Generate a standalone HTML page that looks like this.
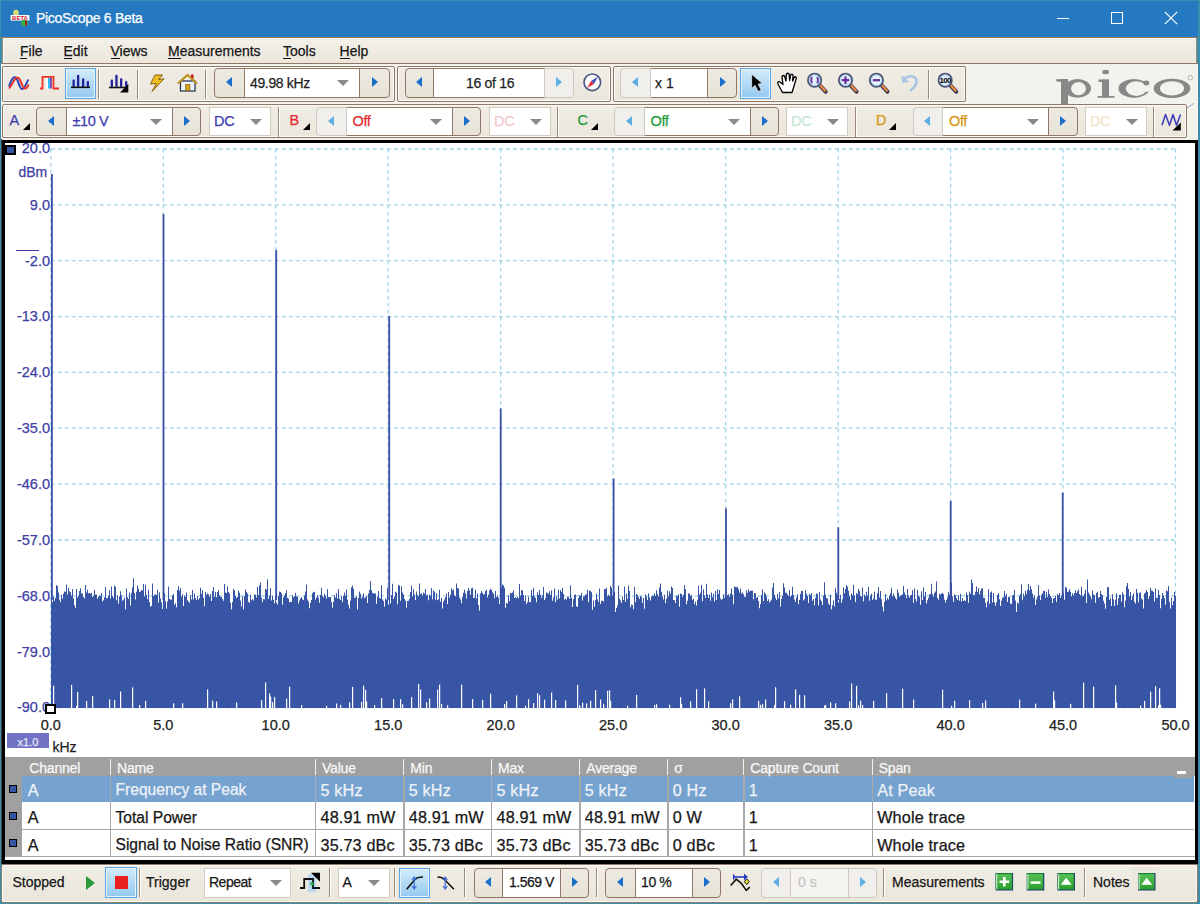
<!DOCTYPE html><html><head><meta charset="utf-8"><style>
*{box-sizing:border-box;}
html,body{margin:0;padding:0;}
body{width:1200px;height:904px;overflow:hidden;position:relative;background:#3b8eac;font-family:"Liberation Sans",sans-serif;}
.a{position:absolute;}
.t{position:absolute;white-space:nowrap;line-height:1;-webkit-text-stroke:0.25px currentColor;}
.strip{position:absolute;border:1.3px solid #8f7868;border-radius:2px;background:linear-gradient(#f0ede6,#ebe6db);box-shadow:inset 0 0 0 1px #fcfbf8;}
.bl{position:absolute;border:1.5px solid #8f7868;border-radius:4px 0 0 4px;background:linear-gradient(#eeeae2,#e8e3d7);}
.br{position:absolute;border:1.5px solid #8f7868;border-radius:0 4px 4px 0;background:linear-gradient(#eeeae2,#e8e3d7);}
.bl.dis,.br.dis{border-color:#cdc8c2;background:#f1efeb;}
.fld{position:absolute;background:#fff;border-top:1.5px solid #8f7868;border-bottom:1.5px solid #8f7868;}
.sep{position:absolute;width:2px;border-left:1.3px solid #9c8878;border-right:1px solid #fff;}
.tri{position:absolute;width:0;height:0;}
.combo{position:absolute;background:#fff;border:1px solid #d4cdc2;}
.dd{position:absolute;width:0;height:0;border-left:6px solid transparent;border-right:6px solid transparent;border-top:6px solid #8a8a8a;}
.sel{position:absolute;border:1.6px solid #58a4e4;background:linear-gradient(#d2ebfa,#94c9f0);box-shadow:inset 0 0 0 1px #e4f3fc;}
</style></head><body><div class="a" style="left:1px;top:1px;width:1197px;height:36px;background:#2479c0"></div>
<svg class="a" style="left:8px;top:8px" width="24" height="22" viewBox="8 8 24 22"><ellipse cx="16" cy="13" rx="2.8" ry="3.2" fill="#d8e070"/><rect x="10.6" y="15" width="18.8" height="5.6" fill="#fff"/><text x="20" y="20" font-family="Liberation Sans" font-weight="bold" font-size="6" text-anchor="middle" fill="#d82030">BETA</text><ellipse cx="24.5" cy="23" rx="3.3" ry="3.2" fill="#38b040"/><rect x="25" y="20.6" width="2" height="5" fill="#a02020"/></svg>
<div class="t" style="left:36px;top:11px;font-size:14px;color:#fff;letter-spacing:-0.3px">PicoScope 6 Beta</div>
<div class="a" style="left:1057px;top:17.5px;width:12px;height:1.2px;background:#fff"></div>
<div class="a" style="left:1110.5px;top:11.7px;width:12.5px;height:12.5px;border:1.2px solid #fff"></div>
<svg class="a" style="left:1164px;top:11px" width="14" height="14"><path d="M0.8 0.8L13.2 13.2M13.2 0.8L0.8 13.2" stroke="#fff" stroke-width="1.2"/></svg>
<div class="a" style="left:1px;top:36.5px;width:1197px;height:1.2px;background:#a07858"></div>
<div class="a" style="left:1.5px;top:37.5px;width:1195px;height:26px;background:linear-gradient(#f4f1eb,#ebe5da);border-left:1.2px solid #9a8a7c;border-right:1.2px solid #9a8a7c;box-shadow:inset 1px 1px 0 #fbfaf7"></div>
<div class="a" style="left:1px;top:62.5px;width:1197px;height:1.3px;background:#8f7868"></div>
<div class="t" style="left:20px;top:44px;font-size:14px;color:#161616">File</div>
<div class="a" style="left:20px;top:57.5px;width:7px;height:1.3px;background:#111"></div>
<div class="t" style="left:63.5px;top:44px;font-size:14px;color:#161616">Edit</div>
<div class="a" style="left:63.5px;top:57.5px;width:8px;height:1.3px;background:#111"></div>
<div class="t" style="left:110.5px;top:44px;font-size:14px;color:#161616">Views</div>
<div class="a" style="left:110.5px;top:57.5px;width:9.5px;height:1.3px;background:#111"></div>
<div class="t" style="left:168px;top:44px;font-size:14px;color:#161616">Measurements</div>
<div class="a" style="left:168px;top:57.5px;width:12.5px;height:1.3px;background:#111"></div>
<div class="t" style="left:283px;top:44px;font-size:14px;color:#161616">Tools</div>
<div class="a" style="left:283px;top:57.5px;width:7.5px;height:1.3px;background:#111"></div>
<div class="t" style="left:339.6px;top:44px;font-size:14px;color:#161616">Help</div>
<div class="a" style="left:339.6px;top:57.5px;width:10.4px;height:1.3px;background:#111"></div>
<div class="a" style="left:1px;top:63.8px;width:1197px;height:76.5px;background:#f4f2ed"></div>
<div class="strip" style="left:1.5px;top:65.6px;width:393px;height:36px"></div>
<div class="strip" style="left:396.7px;top:65.6px;width:214.2px;height:36px"></div>
<div class="strip" style="left:613px;top:65.6px;width:353px;height:36px"></div>
<div class="strip" style="left:1.5px;top:103.5px;width:1185.5px;height:34.6px"></div>
<div class="sel" style="left:65.4px;top:67.6px;width:31px;height:31px"></div>
<div class="sep" style="left:98.4px;top:69.5px;height:29px"></div>
<div class="sep" style="left:137.0px;top:69.5px;height:29px"></div>
<div class="sep" style="left:205.0px;top:69.5px;height:29px"></div>
<div class="fld" style="left:243.0px;top:67.8px;width:117.0px;height:30.6px"></div>
<div class="bl" style="left:214.0px;top:67.8px;width:30.5px;height:30.6px"></div>
<div class="br" style="left:358.5px;top:67.8px;width:31.5px;height:30.6px"></div>
<div class="tri" style="left:225.6px;top:77.3px;border-top:5.8px solid transparent;border-bottom:5.8px solid transparent;border-right:6.8px solid #1a6fc9"></div>
<div class="tri" style="left:371.7px;top:77.3px;border-top:5.8px solid transparent;border-bottom:5.8px solid transparent;border-left:6.8px solid #1a6fc9"></div>
<div class="t" style="left:250px;top:76px;font-size:14px;color:#1e1e1e;letter-spacing:-0.35px">49.98 kHz</div>
<div class="dd" style="left:337px;top:80px"></div>
<div class="fld" style="left:432.8px;top:67.8px;width:112.2px;height:30.6px"></div>
<div class="bl" style="left:404.5px;top:67.8px;width:29.8px;height:30.6px"></div>
<div class="br dis" style="left:543.5px;top:67.8px;width:30.5px;height:30.6px"></div>
<div class="tri" style="left:415.8px;top:77.3px;border-top:5.8px solid transparent;border-bottom:5.8px solid transparent;border-right:6.8px solid #1a6fc9"></div>
<div class="tri" style="left:556.2px;top:77.3px;border-top:5.8px solid transparent;border-bottom:5.8px solid transparent;border-left:6.8px solid #5eaee2"></div>
<div class="t" style="left:466px;top:76px;font-size:14px;color:#1e1e1e;letter-spacing:-0.3px">16 of 16</div>
<div class="fld" style="left:649.8px;top:67.8px;width:58.5px;height:30.6px"></div>
<div class="bl dis" style="left:620.3px;top:67.8px;width:31.0px;height:30.6px"></div>
<div class="br" style="left:706.8px;top:67.8px;width:30.7px;height:30.6px"></div>
<div class="tri" style="left:632.1px;top:77.3px;border-top:5.8px solid transparent;border-bottom:5.8px solid transparent;border-right:6.8px solid #5eaee2"></div>
<div class="tri" style="left:719.6px;top:77.3px;border-top:5.8px solid transparent;border-bottom:5.8px solid transparent;border-left:6.8px solid #1a6fc9"></div>
<div class="t" style="left:655px;top:76px;font-size:14px;color:#1e1e1e">x 1</div>
<div class="sel" style="left:740px;top:67.6px;width:31px;height:31px"></div>
<div class="sep" style="left:928px;top:69.5px;height:29px"></div>
<svg class="a" style="left:1050px;top:64px" width="147" height="39.5" viewBox="1050 64 147 39.5"><path d="M1064.0 88.4 A13.5 9.4 0 1 0 1091.0 88.4 A13.5 9.4 0 1 0 1064.0 88.4 Z M1071.0 88.6 A7.5 6.6 0 1 0 1086.0 88.6 A7.5 6.6 0 1 0 1071.0 88.6 Z " fill="#888888" fill-rule="evenodd"/><rect x="1061" y="79" width="7" height="25" fill="#888888"/><path d="M1055.6 79.3 L1068 79 L1068 81.8 L1057 81.8 Z" fill="#888888"/><rect x="1102" y="79.6" width="7" height="18" fill="#888888"/><path d="M1097.5 96 H1114.5 V97.8 H1097.5 Z M1098.5 79.6 H1109 V82 H1098.5 Z" fill="#888888"/><ellipse cx="1105.6" cy="72" rx="3.4" ry="2.2" fill="#888888"/><path d="M1118.5 88.4 A15.5 9.5 0 1 0 1149.5 88.4 A15.5 9.5 0 1 0 1118.5 88.4 Z M1125.8 88.6 A10.5 7.3 0 1 0 1146.8 88.6 A10.5 7.3 0 1 0 1125.8 88.6 Z " fill="#888888" fill-rule="evenodd"/><rect x="1143.5" y="84.2" width="8" height="7.5" fill="#f4f2ed"/><ellipse cx="1146.3" cy="83" rx="3" ry="2.4" fill="#888888"/><path d="M1153.7 88.4 A18.3 9.6 0 1 0 1190.3 88.4 A18.3 9.6 0 1 0 1153.7 88.4 Z M1160.0 88.4 A12.0 7.2 0 1 0 1184.0 88.4 A12.0 7.2 0 1 0 1160.0 88.4 Z " fill="#888888" fill-rule="evenodd"/><circle cx="1190.3" cy="77.7" r="2.3" fill="none" stroke="#a8a8a8" stroke-width="0.8"/></svg>
<div class="t" style="left:9.5px;top:113px;font-size:14.5px;color:#3c3cb0">A</div>
<div class="tri" style="left:22.5px;top:122.5px;border-left:7.5px solid transparent;border-bottom:7.5px solid #000"></div>
<div class="fld" style="left:65.0px;top:106.5px;width:108.0px;height:29.5px"></div>
<div class="bl" style="left:36.0px;top:106.5px;width:30.5px;height:29.5px"></div>
<div class="br" style="left:171.5px;top:106.5px;width:29.5px;height:29.5px"></div>
<div class="tri" style="left:47.6px;top:115.5px;border-top:5.8px solid transparent;border-bottom:5.8px solid transparent;border-right:6.8px solid #1a6fc9"></div>
<div class="tri" style="left:183.7px;top:115.5px;border-top:5.8px solid transparent;border-bottom:5.8px solid transparent;border-left:6.8px solid #1a6fc9"></div>
<div class="t" style="left:72.5px;top:114px;font-size:14.5px;color:#3c3cb0;letter-spacing:-0.4px">±10 V</div>
<div class="dd" style="left:150px;top:118.5px"></div>
<div class="combo" style="left:209px;top:106.5px;width:62px;height:29.5px"></div>
<div class="t" style="left:214px;top:114px;font-size:14.5px;color:#3c3cb0;letter-spacing:-0.3px">DC</div>
<div class="dd" style="left:250px;top:118.5px"></div>
<div class="sep" style="left:278px;top:107px;height:30px"></div>
<div class="t" style="left:289.5px;top:113px;font-size:14.5px;color:#e4282e">B</div>
<div class="tri" style="left:302.5px;top:122.5px;border-left:7.5px solid transparent;border-bottom:7.5px solid #000"></div>
<div class="fld" style="left:345.0px;top:106.5px;width:108.0px;height:29.5px"></div>
<div class="bl dis" style="left:316.0px;top:106.5px;width:30.5px;height:29.5px"></div>
<div class="br" style="left:451.5px;top:106.5px;width:29.5px;height:29.5px"></div>
<div class="tri" style="left:327.6px;top:115.5px;border-top:5.8px solid transparent;border-bottom:5.8px solid transparent;border-right:6.8px solid #5eaee2"></div>
<div class="tri" style="left:463.7px;top:115.5px;border-top:5.8px solid transparent;border-bottom:5.8px solid transparent;border-left:6.8px solid #1a6fc9"></div>
<div class="t" style="left:352.5px;top:114px;font-size:14.5px;color:#e4282e;letter-spacing:-0.4px">Off</div>
<div class="dd" style="left:430px;top:118.5px"></div>
<div class="combo" style="left:489px;top:106.5px;width:62px;height:29.5px"></div>
<div class="t" style="left:494px;top:114px;font-size:14.5px;color:#f4c8cc;letter-spacing:-0.3px">DC</div>
<div class="dd" style="left:530px;top:118.5px"></div>
<div class="sep" style="left:557px;top:107px;height:30px"></div>
<div class="t" style="left:577.5px;top:113px;font-size:14.5px;color:#1e9a3a">C</div>
<div class="tri" style="left:590.5px;top:122.5px;border-left:7.5px solid transparent;border-bottom:7.5px solid #000"></div>
<div class="fld" style="left:643.0px;top:106.5px;width:108.0px;height:29.5px"></div>
<div class="bl dis" style="left:614.0px;top:106.5px;width:30.5px;height:29.5px"></div>
<div class="br" style="left:749.5px;top:106.5px;width:29.5px;height:29.5px"></div>
<div class="tri" style="left:625.6px;top:115.5px;border-top:5.8px solid transparent;border-bottom:5.8px solid transparent;border-right:6.8px solid #5eaee2"></div>
<div class="tri" style="left:761.7px;top:115.5px;border-top:5.8px solid transparent;border-bottom:5.8px solid transparent;border-left:6.8px solid #1a6fc9"></div>
<div class="t" style="left:650.5px;top:114px;font-size:14.5px;color:#1e9a3a;letter-spacing:-0.4px">Off</div>
<div class="dd" style="left:728px;top:118.5px"></div>
<div class="combo" style="left:786px;top:106.5px;width:62px;height:29.5px"></div>
<div class="t" style="left:791px;top:114px;font-size:14.5px;color:#c4e6d2;letter-spacing:-0.3px">DC</div>
<div class="dd" style="left:827px;top:118.5px"></div>
<div class="sep" style="left:854.5px;top:107px;height:30px"></div>
<div class="t" style="left:876px;top:113px;font-size:14.5px;color:#d4960e">D</div>
<div class="tri" style="left:889px;top:122.5px;border-left:7.5px solid transparent;border-bottom:7.5px solid #000"></div>
<div class="fld" style="left:941.5px;top:106.5px;width:108.0px;height:29.5px"></div>
<div class="bl dis" style="left:912.5px;top:106.5px;width:30.5px;height:29.5px"></div>
<div class="br" style="left:1048.0px;top:106.5px;width:29.5px;height:29.5px"></div>
<div class="tri" style="left:924.1px;top:115.5px;border-top:5.8px solid transparent;border-bottom:5.8px solid transparent;border-right:6.8px solid #5eaee2"></div>
<div class="tri" style="left:1060.2px;top:115.5px;border-top:5.8px solid transparent;border-bottom:5.8px solid transparent;border-left:6.8px solid #1a6fc9"></div>
<div class="t" style="left:949.0px;top:114px;font-size:14.5px;color:#d4960e;letter-spacing:-0.4px">Off</div>
<div class="dd" style="left:1026.5px;top:118.5px"></div>
<div class="combo" style="left:1085px;top:106.5px;width:62px;height:29.5px"></div>
<div class="t" style="left:1090px;top:114px;font-size:14.5px;color:#f2e4c8;letter-spacing:-0.3px">DC</div>
<div class="dd" style="left:1126px;top:118.5px"></div>
<div class="sep" style="left:1153px;top:107px;height:30px"></div>
<svg class="a" style="left:1158px;top:110px" width="26" height="24" viewBox="1158 110 26 24"><path d="M1162 125.3 L1165.5 114.5 L1169.5 125.3 L1173 114.5 L1176.5 125.3 L1180.5 114.5" fill="none" stroke="#4444b8" stroke-width="1.6" stroke-linejoin="round"/><path d="M1172.5 130.5 H1180.8 V122.5 Z" fill="#000"/></svg>
<svg class="a" style="left:1186px;top:102px" width="10" height="8"><path d="M1 6 L8 1.3" stroke="#8aa8c8" stroke-width="1"/></svg>
<div class="a" style="left:1.2px;top:139.6px;width:1197px;height:724.4px;background:#000"></div>
<div class="a" style="left:1px;top:139px;width:1.2px;height:725px;background:#4a4040"></div>
<div class="a" style="left:5.2px;top:142.6px;width:1189.8px;height:615.7px;background:#fff"></div>
<svg class="a" style="left:0;top:0" width="1200" height="904"><line x1="50.8" y1="149.0" x2="50.8" y2="707.5" stroke="#a0d4e8" stroke-width="1.3" stroke-dasharray="3.5 3.5"/><line x1="50.8" y1="149.0" x2="1175.5" y2="149.0" stroke="#a0d4e8" stroke-width="1.3" stroke-dasharray="4 3"/><line x1="163.3" y1="149.0" x2="163.3" y2="707.5" stroke="#a0d4e8" stroke-width="1.3" stroke-dasharray="3.5 3.5"/><line x1="50.8" y1="204.8" x2="1175.5" y2="204.8" stroke="#a0d4e8" stroke-width="1.3" stroke-dasharray="4 3"/><line x1="275.7" y1="149.0" x2="275.7" y2="707.5" stroke="#a0d4e8" stroke-width="1.3" stroke-dasharray="3.5 3.5"/><line x1="50.8" y1="260.7" x2="1175.5" y2="260.7" stroke="#a0d4e8" stroke-width="1.3" stroke-dasharray="4 3"/><line x1="388.2" y1="149.0" x2="388.2" y2="707.5" stroke="#a0d4e8" stroke-width="1.3" stroke-dasharray="3.5 3.5"/><line x1="50.8" y1="316.6" x2="1175.5" y2="316.6" stroke="#a0d4e8" stroke-width="1.3" stroke-dasharray="4 3"/><line x1="500.7" y1="149.0" x2="500.7" y2="707.5" stroke="#a0d4e8" stroke-width="1.3" stroke-dasharray="3.5 3.5"/><line x1="50.8" y1="372.4" x2="1175.5" y2="372.4" stroke="#a0d4e8" stroke-width="1.3" stroke-dasharray="4 3"/><line x1="613.1" y1="149.0" x2="613.1" y2="707.5" stroke="#a0d4e8" stroke-width="1.3" stroke-dasharray="3.5 3.5"/><line x1="50.8" y1="428.2" x2="1175.5" y2="428.2" stroke="#a0d4e8" stroke-width="1.3" stroke-dasharray="4 3"/><line x1="725.6" y1="149.0" x2="725.6" y2="707.5" stroke="#a0d4e8" stroke-width="1.3" stroke-dasharray="3.5 3.5"/><line x1="50.8" y1="484.1" x2="1175.5" y2="484.1" stroke="#a0d4e8" stroke-width="1.3" stroke-dasharray="4 3"/><line x1="838.1" y1="149.0" x2="838.1" y2="707.5" stroke="#a0d4e8" stroke-width="1.3" stroke-dasharray="3.5 3.5"/><line x1="50.8" y1="540.0" x2="1175.5" y2="540.0" stroke="#a0d4e8" stroke-width="1.3" stroke-dasharray="4 3"/><line x1="950.6" y1="149.0" x2="950.6" y2="707.5" stroke="#a0d4e8" stroke-width="1.3" stroke-dasharray="3.5 3.5"/><line x1="50.8" y1="595.8" x2="1175.5" y2="595.8" stroke="#a0d4e8" stroke-width="1.3" stroke-dasharray="4 3"/><line x1="1063.0" y1="149.0" x2="1063.0" y2="707.5" stroke="#a0d4e8" stroke-width="1.3" stroke-dasharray="3.5 3.5"/><line x1="50.8" y1="651.7" x2="1175.5" y2="651.7" stroke="#a0d4e8" stroke-width="1.3" stroke-dasharray="4 3"/><line x1="1175.5" y1="149.0" x2="1175.5" y2="707.5" stroke="#a0d4e8" stroke-width="1.3" stroke-dasharray="3.5 3.5"/><line x1="50.8" y1="707.5" x2="1175.5" y2="707.5" stroke="#a0d4e8" stroke-width="1.3" stroke-dasharray="4 3"/><path d="M51 708.0 L51 595.8 L52 595.8 L52 602.1 L53 602.1 L53 596.5 L54 596.5 L54 600.8 L55 600.8 L55 597.8 L56 597.8 L56 585.2 L57 585.2 L57 586.1 L58 586.1 L58 592.6 L59 592.6 L59 599.5 L60 599.5 L60 601.9 L61 601.9 L61 594.8 L62 594.8 L62 598.5 L63 598.5 L63 593.7 L64 593.7 L64 591.5 L65 591.5 L65 591.7 L66 591.7 L66 584.5 L67 584.5 L67 594.4 L68 594.4 L68 588.1 L69 588.1 L69 591.3 L70 591.3 L70 592.3 L71 592.3 L71 595.5 L72 595.5 L72 589.1 L73 589.1 L73 598.4 L74 598.4 L74 605.3 L75 605.3 L75 607.7 L76 607.7 L76 589.0 L77 589.0 L77 597.6 L78 597.6 L78 595.5 L79 595.5 L79 591.1 L80 591.1 L80 588.3 L81 588.3 L81 593.5 L82 593.5 L82 593.4 L83 593.4 L83 597.1 L84 597.1 L84 598.4 L85 598.4 L85 584.9 L86 584.9 L86 592.6 L87 592.6 L87 589.8 L88 589.8 L88 593.3 L89 593.3 L89 593.1 L90 593.1 L90 593.8 L91 593.8 L91 593.1 L92 593.1 L92 597.1 L93 597.1 L93 596.1 L94 596.1 L94 589.9 L95 589.9 L95 594.5 L96 594.5 L96 594.6 L97 594.6 L97 598.8 L98 598.8 L98 596.8 L99 596.8 L99 595.5 L100 595.5 L100 596.3 L101 596.3 L101 593.1 L102 593.1 L102 601.3 L103 601.3 L103 600.3 L104 600.3 L104 597.3 L105 597.3 L105 587.1 L106 587.1 L106 598.2 L107 598.2 L107 597.9 L108 597.9 L108 596.0 L109 596.0 L109 589.9 L110 589.9 L110 598.6 L111 598.6 L111 586.5 L112 586.5 L112 596.1 L113 596.1 L113 598.0 L114 598.0 L114 585.8 L115 585.8 L115 586.8 L116 586.8 L116 600.3 L117 600.3 L117 595.4 L118 595.4 L118 603.8 L119 603.8 L119 596.6 L120 596.6 L120 591.2 L121 591.2 L121 595.5 L122 595.5 L122 600.8 L123 600.8 L123 599.7 L124 599.7 L124 597.5 L125 597.5 L125 609.2 L126 609.2 L126 588.5 L127 588.5 L127 597.3 L128 597.3 L128 599.0 L129 599.0 L129 592.4 L130 592.4 L130 605.5 L131 605.5 L131 592.7 L132 592.7 L132 587.2 L133 587.2 L133 578.3 L134 578.3 L134 593.0 L135 593.0 L135 599.5 L136 599.5 L136 591.8 L137 591.8 L137 585.5 L138 585.5 L138 588.8 L139 588.8 L139 592.1 L140 592.1 L140 591.7 L141 591.7 L141 590.1 L142 590.1 L142 590.5 L143 590.5 L143 584.0 L144 584.0 L144 596.5 L145 596.5 L145 584.7 L146 584.7 L146 595.1 L147 595.1 L147 599.3 L148 599.3 L148 589.7 L149 589.7 L149 601.9 L150 601.9 L150 606.7 L151 606.7 L151 605.7 L152 605.7 L152 583.5 L153 583.5 L153 596.0 L154 596.0 L154 594.8 L155 594.8 L155 594.6 L156 594.6 L156 594.9 L157 594.9 L157 589.7 L158 589.7 L158 602.6 L159 602.6 L159 592.2 L160 592.2 L160 598.6 L161 598.6 L161 602.3 L162 602.3 L162 609.0 L163 609.0 L163 597.8 L164 597.8 L164 593.0 L165 593.0 L165 601.0 L166 601.0 L166 608.4 L167 608.4 L167 601.5 L168 601.5 L168 586.5 L169 586.5 L169 599.1 L170 599.1 L170 599.4 L171 599.4 L171 599.8 L172 599.8 L172 595.4 L173 595.4 L173 594.0 L174 594.0 L174 605.0 L175 605.0 L175 603.2 L176 603.2 L176 607.2 L177 607.2 L177 590.0 L178 590.0 L178 586.3 L179 586.3 L179 590.7 L180 590.7 L180 588.3 L181 588.3 L181 596.6 L182 596.6 L182 594.3 L183 594.3 L183 606.0 L184 606.0 L184 595.5 L185 595.5 L185 597.0 L186 597.0 L186 592.5 L187 592.5 L187 600.2 L188 600.2 L188 601.4 L189 601.4 L189 602.8 L190 602.8 L190 595.1 L191 595.1 L191 599.6 L192 599.6 L192 590.0 L193 590.0 L193 599.4 L194 599.4 L194 593.4 L195 593.4 L195 598.2 L196 598.2 L196 599.9 L197 599.9 L197 596.0 L198 596.0 L198 599.7 L199 599.7 L199 597.9 L200 597.9 L200 587.7 L201 587.7 L201 593.8 L202 593.8 L202 590.2 L203 590.2 L203 597.7 L204 597.7 L204 606.2 L205 606.2 L205 592.0 L206 592.0 L206 594.9 L207 594.9 L207 593.2 L208 593.2 L208 594.2 L209 594.2 L209 596.4 L210 596.4 L210 594.1 L211 594.1 L211 601.1 L212 601.1 L212 591.0 L213 591.0 L213 587.0 L214 587.0 L214 597.0 L215 597.0 L215 591.8 L216 591.8 L216 597.3 L217 597.3 L217 592.1 L218 592.1 L218 590.3 L219 590.3 L219 595.6 L220 595.6 L220 596.8 L221 596.8 L221 597.0 L222 597.0 L222 599.0 L223 599.0 L223 600.7 L224 600.7 L224 584.1 L225 584.1 L225 592.4 L226 592.4 L226 593.1 L227 593.1 L227 586.5 L228 586.5 L228 592.0 L229 592.0 L229 593.5 L230 593.5 L230 602.8 L231 602.8 L231 609.6 L232 609.6 L232 602.0 L233 602.0 L233 589.0 L234 589.0 L234 590.3 L235 590.3 L235 595.9 L236 595.9 L236 597.9 L237 597.9 L237 596.9 L238 596.9 L238 590.5 L239 590.5 L239 592.8 L240 592.8 L240 600.6 L241 600.6 L241 606.5 L242 606.5 L242 596.6 L243 596.6 L243 609.2 L244 609.2 L244 596.1 L245 596.1 L245 589.5 L246 589.5 L246 591.9 L247 591.9 L247 593.5 L248 593.5 L248 601.8 L249 601.8 L249 602.8 L250 602.8 L250 594.7 L251 594.7 L251 600.2 L252 600.2 L252 598.9 L253 598.9 L253 600.5 L254 600.5 L254 594.5 L255 594.5 L255 594.7 L256 594.7 L256 597.6 L257 597.6 L257 587.1 L258 587.1 L258 594.9 L259 594.9 L259 585.3 L260 585.3 L260 582.4 L261 582.4 L261 597.7 L262 597.7 L262 602.0 L263 602.0 L263 599.0 L264 599.0 L264 599.2 L265 599.2 L265 589.1 L266 589.1 L266 589.6 L267 589.6 L267 579.2 L268 579.2 L268 599.1 L269 599.1 L269 595.7 L270 595.7 L270 588.3 L271 588.3 L271 600.5 L272 600.5 L272 595.5 L273 595.5 L273 599.7 L274 599.7 L274 603.3 L275 603.3 L275 595.5 L276 595.5 L276 602.4 L277 602.4 L277 604.5 L278 604.5 L278 596.3 L279 596.3 L279 591.6 L280 591.6 L280 592.0 L281 592.0 L281 593.3 L282 593.3 L282 604.8 L283 604.8 L283 597.5 L284 597.5 L284 595.6 L285 595.6 L285 593.3 L286 593.3 L286 590.3 L287 590.3 L287 598.0 L288 598.0 L288 598.6 L289 598.6 L289 602.3 L290 602.3 L290 601.7 L291 601.7 L291 602.0 L292 602.0 L292 595.2 L293 595.2 L293 597.3 L294 597.3 L294 596.3 L295 596.3 L295 592.8 L296 592.8 L296 596.4 L297 596.4 L297 596.8 L298 596.8 L298 603.4 L299 603.4 L299 600.5 L300 600.5 L300 598.5 L301 598.5 L301 597.0 L302 597.0 L302 599.3 L303 599.3 L303 600.1 L304 600.1 L304 595.5 L305 595.5 L305 591.5 L306 591.5 L306 584.6 L307 584.6 L307 599.6 L308 599.6 L308 601.5 L309 601.5 L309 608.2 L310 608.2 L310 602.8 L311 602.8 L311 599.9 L312 599.9 L312 593.2 L313 593.2 L313 591.8 L314 591.8 L314 592.1 L315 592.1 L315 599.5 L316 599.5 L316 597.5 L317 597.5 L317 595.2 L318 595.2 L318 597.7 L319 597.7 L319 602.7 L320 602.7 L320 595.0 L321 595.0 L321 588.1 L322 588.1 L322 595.7 L323 595.7 L323 597.5 L324 597.5 L324 593.8 L325 593.8 L325 596.0 L326 596.0 L326 598.5 L327 598.5 L327 589.2 L328 589.2 L328 596.9 L329 596.9 L329 597.3 L330 597.3 L330 596.9 L331 596.9 L331 601.9 L332 601.9 L332 607.8 L333 607.8 L333 601.8 L334 601.8 L334 595.2 L335 595.2 L335 597.4 L336 597.4 L336 593.2 L337 593.2 L337 598.5 L338 598.5 L338 589.1 L339 589.1 L339 598.6 L340 598.6 L340 600.1 L341 600.1 L341 596.2 L342 596.2 L342 602.0 L343 602.0 L343 595.7 L344 595.7 L344 592.5 L345 592.5 L345 595.8 L346 595.8 L346 589.4 L347 589.4 L347 599.7 L348 599.7 L348 604.7 L349 604.7 L349 608.6 L350 608.6 L350 600.6 L351 600.6 L351 587.3 L352 587.3 L352 585.6 L353 585.6 L353 588.8 L354 588.8 L354 597.7 L355 597.7 L355 597.8 L356 597.8 L356 596.2 L357 596.2 L357 609.4 L358 609.4 L358 597.9 L359 597.9 L359 591.4 L360 591.4 L360 593.7 L361 593.7 L361 598.4 L362 598.4 L362 596.5 L363 596.5 L363 593.2 L364 593.2 L364 598.2 L365 598.2 L365 597.2 L366 597.2 L366 596.0 L367 596.0 L367 602.9 L368 602.9 L368 593.6 L369 593.6 L369 590.1 L370 590.1 L370 581.1 L371 581.1 L371 590.2 L372 590.2 L372 592.8 L373 592.8 L373 593.5 L374 593.5 L374 593.5 L375 593.5 L375 593.6 L376 593.6 L376 603.7 L377 603.7 L377 596.4 L378 596.4 L378 591.0 L379 591.0 L379 598.0 L380 598.0 L380 598.6 L381 598.6 L381 585.4 L382 585.4 L382 599.6 L383 599.6 L383 601.1 L384 601.1 L384 606.7 L385 606.7 L385 598.6 L386 598.6 L386 599.5 L387 599.5 L387 587.7 L388 587.7 L388 605.1 L389 605.1 L389 599.4 L390 599.4 L390 603.6 L391 603.6 L391 594.9 L392 594.9 L392 583.7 L393 583.7 L393 599.1 L394 599.1 L394 596.8 L395 596.8 L395 591.8 L396 591.8 L396 592.5 L397 592.5 L397 604.3 L398 604.3 L398 585.1 L399 585.1 L399 585.8 L400 585.8 L400 600.7 L401 600.7 L401 586.2 L402 586.2 L402 592.6 L403 592.6 L403 594.5 L404 594.5 L404 598.9 L405 598.9 L405 600.7 L406 600.7 L406 607.8 L407 607.8 L407 600.9 L408 600.9 L408 600.8 L409 600.8 L409 598.8 L410 598.8 L410 592.0 L411 592.0 L411 585.7 L412 585.7 L412 596.3 L413 596.3 L413 589.3 L414 589.3 L414 594.5 L415 594.5 L415 600.1 L416 600.1 L416 591.6 L417 591.6 L417 595.0 L418 595.0 L418 596.2 L419 596.2 L419 583.6 L420 583.6 L420 594.1 L421 594.1 L421 593.2 L422 593.2 L422 595.6 L423 595.6 L423 592.6 L424 592.6 L424 593.4 L425 593.4 L425 589.1 L426 589.1 L426 595.3 L427 595.3 L427 594.8 L428 594.8 L428 600.3 L429 600.3 L429 594.5 L430 594.5 L430 595.7 L431 595.7 L431 588.1 L432 588.1 L432 599.2 L433 599.2 L433 590.4 L434 590.4 L434 591.8 L435 591.8 L435 599.7 L436 599.7 L436 593.2 L437 593.2 L437 600.2 L438 600.2 L438 599.2 L439 599.2 L439 589.8 L440 589.8 L440 601.7 L441 601.7 L441 598.0 L442 598.0 L442 608.5 L443 608.5 L443 601.6 L444 601.6 L444 599.4 L445 599.4 L445 597.1 L446 597.1 L446 593.4 L447 593.4 L447 604.1 L448 604.1 L448 591.9 L449 591.9 L449 597.5 L450 597.5 L450 594.7 L451 594.7 L451 588.4 L452 588.4 L452 590.3 L453 590.3 L453 589.4 L454 589.4 L454 595.3 L455 595.3 L455 596.2 L456 596.2 L456 583.6 L457 583.6 L457 587.9 L458 587.9 L458 588.7 L459 588.7 L459 597.4 L460 597.4 L460 599.5 L461 599.5 L461 603.3 L462 603.3 L462 596.7 L463 596.7 L463 592.8 L464 592.8 L464 589.8 L465 589.8 L465 593.5 L466 593.5 L466 598.6 L467 598.6 L467 590.9 L468 590.9 L468 588.0 L469 588.0 L469 590.2 L470 590.2 L470 594.7 L471 594.7 L471 588.2 L472 588.2 L472 587.7 L473 587.7 L473 598.1 L474 598.1 L474 597.7 L475 597.7 L475 589.7 L476 589.7 L476 598.4 L477 598.4 L477 593.4 L478 593.4 L478 605.1 L479 605.1 L479 610.5 L480 610.5 L480 593.4 L481 593.4 L481 591.1 L482 591.1 L482 592.8 L483 592.8 L483 594.5 L484 594.5 L484 594.3 L485 594.3 L485 591.1 L486 591.1 L486 589.7 L487 589.7 L487 597.4 L488 597.4 L488 594.8 L489 594.8 L489 590.5 L490 590.5 L490 588.8 L491 588.8 L491 589.7 L492 589.7 L492 592.2 L493 592.2 L493 593.4 L494 593.4 L494 598.3 L495 598.3 L495 591.0 L496 591.0 L496 597.0 L497 597.0 L497 595.4 L498 595.4 L498 597.7 L499 597.7 L499 604.1 L500 604.1 L500 595.5 L501 595.5 L501 587.5 L502 587.5 L502 584.6 L503 584.6 L503 585.6 L504 585.6 L504 587.7 L505 587.7 L505 607.8 L506 607.8 L506 603.0 L507 603.0 L507 603.5 L508 603.5 L508 595.3 L509 595.3 L509 600.9 L510 600.9 L510 593.0 L511 593.0 L511 593.3 L512 593.3 L512 592.6 L513 592.6 L513 590.4 L514 590.4 L514 597.9 L515 597.9 L515 597.2 L516 597.2 L516 598.3 L517 598.3 L517 596.6 L518 596.6 L518 598.2 L519 598.2 L519 584.1 L520 584.1 L520 595.8 L521 595.8 L521 590.6 L522 590.6 L522 589.9 L523 589.9 L523 594.9 L524 594.9 L524 600.9 L525 600.9 L525 595.2 L526 595.2 L526 604.0 L527 604.0 L527 601.9 L528 601.9 L528 596.8 L529 596.8 L529 602.0 L530 602.0 L530 602.2 L531 602.2 L531 590.0 L532 590.0 L532 595.8 L533 595.8 L533 587.8 L534 587.8 L534 596.2 L535 596.2 L535 598.0 L536 598.0 L536 602.2 L537 602.2 L537 592.3 L538 592.3 L538 594.9 L539 594.9 L539 590.0 L540 590.0 L540 594.6 L541 594.6 L541 597.8 L542 597.8 L542 595.6 L543 595.6 L543 587.1 L544 587.1 L544 599.9 L545 599.9 L545 598.2 L546 598.2 L546 592.5 L547 592.5 L547 593.2 L548 593.2 L548 593.5 L549 593.5 L549 591.3 L550 591.3 L550 595.1 L551 595.1 L551 590.5 L552 590.5 L552 600.7 L553 600.7 L553 597.2 L554 597.2 L554 588.5 L555 588.5 L555 602.3 L556 602.3 L556 596.2 L557 596.2 L557 599.4 L558 599.4 L558 589.8 L559 589.8 L559 598.6 L560 598.6 L560 590.0 L561 590.0 L561 592.0 L562 592.0 L562 587.9 L563 587.9 L563 593.9 L564 593.9 L564 599.7 L565 599.7 L565 598.4 L566 598.4 L566 599.4 L567 599.4 L567 596.4 L568 596.4 L568 596.7 L569 596.7 L569 599.0 L570 599.0 L570 585.2 L571 585.2 L571 597.9 L572 597.9 L572 607.1 L573 607.1 L573 599.2 L574 599.2 L574 594.7 L575 594.7 L575 594.6 L576 594.6 L576 606.3 L577 606.3 L577 607.0 L578 607.0 L578 598.1 L579 598.1 L579 595.2 L580 595.2 L580 595.7 L581 595.7 L581 592.7 L582 592.7 L582 600.4 L583 600.4 L583 596.6 L584 596.6 L584 596.3 L585 596.3 L585 594.8 L586 594.8 L586 594.3 L587 594.3 L587 589.8 L588 589.8 L588 602.3 L589 602.3 L589 590.8 L590 590.8 L590 590.8 L591 590.8 L591 592.2 L592 592.2 L592 609.8 L593 609.8 L593 600.6 L594 600.6 L594 606.7 L595 606.7 L595 600.1 L596 600.1 L596 593.6 L597 593.6 L597 599.2 L598 599.2 L598 601.7 L599 601.7 L599 588.4 L600 588.4 L600 603.9 L601 603.9 L601 600.8 L602 600.8 L602 600.7 L603 600.7 L603 601.6 L604 601.6 L604 588.9 L605 588.9 L605 589.3 L606 589.3 L606 587.7 L607 587.7 L607 596.2 L608 596.2 L608 594.8 L609 594.8 L609 596.0 L610 596.0 L610 586.0 L611 586.0 L611 587.4 L612 587.4 L612 595.5 L613 595.5 L613 592.2 L614 592.2 L614 591.9 L615 591.9 L615 612.0 L616 612.0 L616 608.1 L617 608.1 L617 605.5 L618 605.5 L618 585.6 L619 585.6 L619 598.6 L620 598.6 L620 600.4 L621 600.4 L621 603.0 L622 603.0 L622 596.5 L623 596.5 L623 599.9 L624 599.9 L624 586.4 L625 586.4 L625 601.8 L626 601.8 L626 593.4 L627 593.4 L627 598.7 L628 598.7 L628 585.5 L629 585.5 L629 590.9 L630 590.9 L630 607.2 L631 607.2 L631 604.4 L632 604.4 L632 605.0 L633 605.0 L633 609.2 L634 609.2 L634 587.1 L635 587.1 L635 602.2 L636 602.2 L636 593.9 L637 593.9 L637 595.0 L638 595.0 L638 596.9 L639 596.9 L639 599.0 L640 599.0 L640 596.0 L641 596.0 L641 597.0 L642 597.0 L642 602.9 L643 602.9 L643 598.1 L644 598.1 L644 608.8 L645 608.8 L645 594.3 L646 594.3 L646 596.4 L647 596.4 L647 600.1 L648 600.1 L648 593.2 L649 593.2 L649 597.4 L650 597.4 L650 600.4 L651 600.4 L651 596.6 L652 596.6 L652 595.4 L653 595.4 L653 596.0 L654 596.0 L654 593.2 L655 593.2 L655 596.1 L656 596.1 L656 590.3 L657 590.3 L657 593.9 L658 593.9 L658 596.3 L659 596.3 L659 587.5 L660 587.5 L660 583.6 L661 583.6 L661 591.8 L662 591.8 L662 596.8 L663 596.8 L663 599.5 L664 599.5 L664 594.8 L665 594.8 L665 603.2 L666 603.2 L666 598.9 L667 598.9 L667 590.7 L668 590.7 L668 596.6 L669 596.6 L669 591.2 L670 591.2 L670 593.7 L671 593.7 L671 586.5 L672 586.5 L672 588.0 L673 588.0 L673 600.1 L674 600.1 L674 600.3 L675 600.3 L675 602.9 L676 602.9 L676 595.8 L677 595.8 L677 596.3 L678 596.3 L678 594.3 L679 594.3 L679 606.8 L680 606.8 L680 593.5 L681 593.5 L681 594.0 L682 594.0 L682 597.1 L683 597.1 L683 594.8 L684 594.8 L684 584.9 L685 584.9 L685 589.3 L686 589.3 L686 604.3 L687 604.3 L687 600.7 L688 600.7 L688 593.6 L689 593.6 L689 593.6 L690 593.6 L690 595.8 L691 595.8 L691 595.0 L692 595.0 L692 599.8 L693 599.8 L693 598.7 L694 598.7 L694 604.3 L695 604.3 L695 601.4 L696 601.4 L696 605.6 L697 605.6 L697 599.7 L698 599.7 L698 585.8 L699 585.8 L699 594.7 L700 594.7 L700 592.7 L701 592.7 L701 584.8 L702 584.8 L702 601.2 L703 601.2 L703 589.4 L704 589.4 L704 595.2 L705 595.2 L705 598.1 L706 598.1 L706 583.8 L707 583.8 L707 594.6 L708 594.6 L708 598.0 L709 598.0 L709 594.6 L710 594.6 L710 600.8 L711 600.8 L711 592.5 L712 592.5 L712 597.2 L713 597.2 L713 593.7 L714 593.7 L714 601.4 L715 601.4 L715 590.9 L716 590.9 L716 600.1 L717 600.1 L717 589.2 L718 589.2 L718 593.9 L719 593.9 L719 589.9 L720 589.9 L720 598.6 L721 598.6 L721 599.8 L722 599.8 L722 599.1 L723 599.1 L723 594.3 L724 594.3 L724 597.9 L725 597.9 L725 594.6 L726 594.6 L726 598.6 L727 598.6 L727 595.2 L728 595.2 L728 594.2 L729 594.2 L729 596.8 L730 596.8 L730 593.5 L731 593.5 L731 588.4 L732 588.4 L732 594.8 L733 594.8 L733 604.2 L734 604.2 L734 586.4 L735 586.4 L735 586.9 L736 586.9 L736 587.3 L737 587.3 L737 586.7 L738 586.7 L738 589.3 L739 589.3 L739 592.5 L740 592.5 L740 588.4 L741 588.4 L741 593.5 L742 593.5 L742 592.5 L743 592.5 L743 594.2 L744 594.2 L744 597.0 L745 597.0 L745 596.9 L746 596.9 L746 590.2 L747 590.2 L747 592.7 L748 592.7 L748 589.6 L749 589.6 L749 591.5 L750 591.5 L750 590.9 L751 590.9 L751 590.5 L752 590.5 L752 590.5 L753 590.5 L753 599.2 L754 599.2 L754 593.0 L755 593.0 L755 593.3 L756 593.3 L756 597.9 L757 597.9 L757 596.7 L758 596.7 L758 601.0 L759 601.0 L759 608.3 L760 608.3 L760 604.0 L761 604.0 L761 595.1 L762 595.1 L762 589.2 L763 589.2 L763 601.1 L764 601.1 L764 592.4 L765 592.4 L765 593.8 L766 593.8 L766 596.6 L767 596.6 L767 601.1 L768 601.1 L768 599.2 L769 599.2 L769 602.4 L770 602.4 L770 601.1 L771 601.1 L771 599.8 L772 599.8 L772 587.6 L773 587.6 L773 583.0 L774 583.0 L774 594.7 L775 594.7 L775 597.8 L776 597.8 L776 599.9 L777 599.9 L777 593.9 L778 593.9 L778 598.4 L779 598.4 L779 592.1 L780 592.1 L780 606.4 L781 606.4 L781 599.0 L782 599.0 L782 596.0 L783 596.0 L783 583.3 L784 583.3 L784 587.6 L785 587.6 L785 592.5 L786 592.5 L786 593.0 L787 593.0 L787 594.5 L788 594.5 L788 596.0 L789 596.0 L789 590.0 L790 590.0 L790 596.8 L791 596.8 L791 595.2 L792 595.2 L792 586.7 L793 586.7 L793 594.9 L794 594.9 L794 599.4 L795 599.4 L795 602.1 L796 602.1 L796 597.5 L797 597.5 L797 594.2 L798 594.2 L798 603.9 L799 603.9 L799 600.0 L800 600.0 L800 594.1 L801 594.1 L801 590.9 L802 590.9 L802 591.1 L803 591.1 L803 600.4 L804 600.4 L804 599.3 L805 599.3 L805 590.3 L806 590.3 L806 593.7 L807 593.7 L807 596.1 L808 596.1 L808 603.0 L809 603.0 L809 593.8 L810 593.8 L810 595.2 L811 595.2 L811 592.9 L812 592.9 L812 600.7 L813 600.7 L813 599.1 L814 599.1 L814 605.2 L815 605.2 L815 597.7 L816 597.7 L816 593.4 L817 593.4 L817 593.7 L818 593.7 L818 605.4 L819 605.4 L819 592.1 L820 592.1 L820 599.6 L821 599.6 L821 601.2 L822 601.2 L822 605.1 L823 605.1 L823 595.7 L824 595.7 L824 582.2 L825 582.2 L825 594.6 L826 594.6 L826 597.9 L827 597.9 L827 598.5 L828 598.5 L828 603.5 L829 603.5 L829 605.1 L830 605.1 L830 594.7 L831 594.7 L831 609.4 L832 609.4 L832 605.3 L833 605.3 L833 600.5 L834 600.5 L834 606.6 L835 606.6 L835 587.8 L836 587.8 L836 592.8 L837 592.8 L837 594.9 L838 594.9 L838 602.4 L839 602.4 L839 599.1 L840 599.1 L840 594.8 L841 594.8 L841 602.7 L842 602.7 L842 599.3 L843 599.3 L843 587.5 L844 587.5 L844 593.3 L845 593.3 L845 588.9 L846 588.9 L846 584.9 L847 584.9 L847 586.8 L848 586.8 L848 590.8 L849 590.8 L849 596.2 L850 596.2 L850 599.7 L851 599.7 L851 593.4 L852 593.4 L852 595.4 L853 595.4 L853 584.7 L854 584.7 L854 595.2 L855 595.2 L855 601.9 L856 601.9 L856 593.1 L857 593.1 L857 594.3 L858 594.3 L858 589.0 L859 589.0 L859 590.9 L860 590.9 L860 595.8 L861 595.8 L861 596.6 L862 596.6 L862 587.6 L863 587.6 L863 601.4 L864 601.4 L864 594.8 L865 594.8 L865 596.6 L866 596.6 L866 591.7 L867 591.7 L867 595.4 L868 595.4 L868 586.7 L869 586.7 L869 600.7 L870 600.7 L870 595.7 L871 595.7 L871 593.8 L872 593.8 L872 599.9 L873 599.9 L873 598.2 L874 598.2 L874 591.8 L875 591.8 L875 599.7 L876 599.7 L876 599.7 L877 599.7 L877 593.2 L878 593.2 L878 586.9 L879 586.9 L879 597.5 L880 597.5 L880 591.1 L881 591.1 L881 599.2 L882 599.2 L882 606.5 L883 606.5 L883 611.4 L884 611.4 L884 601.7 L885 601.7 L885 594.0 L886 594.0 L886 600.3 L887 600.3 L887 598.1 L888 598.1 L888 599.5 L889 599.5 L889 595.5 L890 595.5 L890 593.2 L891 593.2 L891 587.7 L892 587.7 L892 596.4 L893 596.4 L893 593.3 L894 593.3 L894 596.0 L895 596.0 L895 598.0 L896 598.0 L896 599.4 L897 599.4 L897 589.6 L898 589.6 L898 592.7 L899 592.7 L899 596.8 L900 596.8 L900 596.1 L901 596.1 L901 595.1 L902 595.1 L902 594.4 L903 594.4 L903 586.1 L904 586.1 L904 592.6 L905 592.6 L905 594.7 L906 594.7 L906 598.0 L907 598.0 L907 588.9 L908 588.9 L908 595.4 L909 595.4 L909 597.6 L910 597.6 L910 595.2 L911 595.2 L911 595.0 L912 595.0 L912 590.2 L913 590.2 L913 602.8 L914 602.8 L914 588.6 L915 588.6 L915 599.0 L916 599.0 L916 601.4 L917 601.4 L917 589.7 L918 589.7 L918 595.4 L919 595.4 L919 597.3 L920 597.3 L920 604.8 L921 604.8 L921 591.3 L922 591.3 L922 600.1 L923 600.1 L923 587.4 L924 587.4 L924 596.3 L925 596.3 L925 592.1 L926 592.1 L926 603.6 L927 603.6 L927 600.3 L928 600.3 L928 597.8 L929 597.8 L929 594.6 L930 594.6 L930 593.8 L931 593.8 L931 583.7 L932 583.7 L932 594.2 L933 594.2 L933 596.7 L934 596.7 L934 593.0 L935 593.0 L935 591.6 L936 591.6 L936 581.6 L937 581.6 L937 597.9 L938 597.9 L938 599.8 L939 599.8 L939 593.7 L940 593.7 L940 594.6 L941 594.6 L941 593.6 L942 593.6 L942 592.9 L943 592.9 L943 594.2 L944 594.2 L944 599.4 L945 599.4 L945 602.4 L946 602.4 L946 599.9 L947 599.9 L947 597.4 L948 597.4 L948 592.0 L949 592.0 L949 594.6 L950 594.6 L950 595.4 L951 595.4 L951 582.8 L952 582.8 L952 596.3 L953 596.3 L953 601.7 L954 601.7 L954 594.6 L955 594.6 L955 595.3 L956 595.3 L956 598.1 L957 598.1 L957 600.1 L958 600.1 L958 595.1 L959 595.1 L959 600.8 L960 600.8 L960 593.8 L961 593.8 L961 601.4 L962 601.4 L962 597.9 L963 597.9 L963 601.0 L964 601.0 L964 600.3 L965 600.3 L965 601.0 L966 601.0 L966 592.5 L967 592.5 L967 595.1 L968 595.1 L968 602.8 L969 602.8 L969 591.6 L970 591.6 L970 593.7 L971 593.7 L971 579.6 L972 579.6 L972 583.1 L973 583.1 L973 595.2 L974 595.2 L974 594.9 L975 594.9 L975 591.7 L976 591.7 L976 586.4 L977 586.4 L977 592.0 L978 592.0 L978 588.3 L979 588.3 L979 594.6 L980 594.6 L980 591.1 L981 591.1 L981 588.3 L982 588.3 L982 588.6 L983 588.6 L983 597.8 L984 597.8 L984 597.9 L985 597.9 L985 602.8 L986 602.8 L986 607.2 L987 607.2 L987 601.2 L988 601.2 L988 589.2 L989 589.2 L989 603.7 L990 603.7 L990 592.4 L991 592.4 L991 591.5 L992 591.5 L992 602.5 L993 602.5 L993 592.9 L994 592.9 L994 602.3 L995 602.3 L995 605.8 L996 605.8 L996 602.3 L997 602.3 L997 595.0 L998 595.0 L998 593.0 L999 593.0 L999 599.3 L1000 599.3 L1000 605.9 L1001 605.9 L1001 600.7 L1002 600.7 L1002 597.4 L1003 597.4 L1003 597.4 L1004 597.4 L1004 591.1 L1005 591.1 L1005 596.3 L1006 596.3 L1006 593.7 L1007 593.7 L1007 601.9 L1008 601.9 L1008 596.9 L1009 596.9 L1009 596.8 L1010 596.8 L1010 603.6 L1011 603.6 L1011 604.0 L1012 604.0 L1012 595.8 L1013 595.8 L1013 595.0 L1014 595.0 L1014 590.0 L1015 590.0 L1015 600.4 L1016 600.4 L1016 612.0 L1017 612.0 L1017 602.6 L1018 602.6 L1018 603.5 L1019 603.5 L1019 595.9 L1020 595.9 L1020 594.0 L1021 594.0 L1021 584.5 L1022 584.5 L1022 599.8 L1023 599.8 L1023 593.5 L1024 593.5 L1024 596.3 L1025 596.3 L1025 590.7 L1026 590.7 L1026 594.0 L1027 594.0 L1027 589.7 L1028 589.7 L1028 584.1 L1029 584.1 L1029 590.7 L1030 590.7 L1030 586.0 L1031 586.0 L1031 589.2 L1032 589.2 L1032 593.6 L1033 593.6 L1033 597.8 L1034 597.8 L1034 595.3 L1035 595.3 L1035 605.0 L1036 605.0 L1036 599.2 L1037 599.2 L1037 596.6 L1038 596.6 L1038 585.0 L1039 585.0 L1039 595.6 L1040 595.6 L1040 600.0 L1041 600.0 L1041 595.3 L1042 595.3 L1042 593.3 L1043 593.3 L1043 591.0 L1044 591.0 L1044 591.1 L1045 591.1 L1045 597.8 L1046 597.8 L1046 591.7 L1047 591.7 L1047 596.9 L1048 596.9 L1048 589.6 L1049 589.6 L1049 594.0 L1050 594.0 L1050 596.1 L1051 596.1 L1051 597.8 L1052 597.8 L1052 603.1 L1053 603.1 L1053 598.4 L1054 598.4 L1054 598.1 L1055 598.1 L1055 596.0 L1056 596.0 L1056 602.0 L1057 602.0 L1057 593.9 L1058 593.9 L1058 595.2 L1059 595.2 L1059 593.1 L1060 593.1 L1060 597.9 L1061 597.9 L1061 595.6 L1062 595.6 L1062 593.9 L1063 593.9 L1063 593.0 L1064 593.0 L1064 599.8 L1065 599.8 L1065 586.7 L1066 586.7 L1066 587.8 L1067 587.8 L1067 592.0 L1068 592.0 L1068 591.6 L1069 591.6 L1069 589.3 L1070 589.3 L1070 591.8 L1071 591.8 L1071 596.2 L1072 596.2 L1072 593.3 L1073 593.3 L1073 595.5 L1074 595.5 L1074 592.9 L1075 592.9 L1075 590.3 L1076 590.3 L1076 593.0 L1077 593.0 L1077 591.2 L1078 591.2 L1078 589.5 L1079 589.5 L1079 594.0 L1080 594.0 L1080 595.4 L1081 595.4 L1081 586.7 L1082 586.7 L1082 596.6 L1083 596.6 L1083 596.0 L1084 596.0 L1084 593.8 L1085 593.8 L1085 590.1 L1086 590.1 L1086 603.0 L1087 603.0 L1087 579.6 L1088 579.6 L1088 592.6 L1089 592.6 L1089 594.5 L1090 594.5 L1090 596.5 L1091 596.5 L1091 599.3 L1092 599.3 L1092 590.5 L1093 590.5 L1093 594.6 L1094 594.6 L1094 595.3 L1095 595.3 L1095 602.7 L1096 602.7 L1096 593.1 L1097 593.1 L1097 591.7 L1098 591.7 L1098 597.7 L1099 597.7 L1099 596.9 L1100 596.9 L1100 590.9 L1101 590.9 L1101 594.0 L1102 594.0 L1102 595.4 L1103 595.4 L1103 600.7 L1104 600.7 L1104 603.6 L1105 603.6 L1105 608.8 L1106 608.8 L1106 596.8 L1107 596.8 L1107 587.1 L1108 587.1 L1108 587.3 L1109 587.3 L1109 599.9 L1110 599.9 L1110 598.3 L1111 598.3 L1111 606.1 L1112 606.1 L1112 594.2 L1113 594.2 L1113 599.3 L1114 599.3 L1114 605.9 L1115 605.9 L1115 599.7 L1116 599.7 L1116 593.2 L1117 593.2 L1117 605.1 L1118 605.1 L1118 598.5 L1119 598.5 L1119 594.7 L1120 594.7 L1120 594.8 L1121 594.8 L1121 601.7 L1122 601.7 L1122 592.2 L1123 592.2 L1123 594.5 L1124 594.5 L1124 607.2 L1125 607.2 L1125 600.6 L1126 600.6 L1126 585.9 L1127 585.9 L1127 583.1 L1128 583.1 L1128 589.1 L1129 589.1 L1129 596.5 L1130 596.5 L1130 592.0 L1131 592.0 L1131 600.1 L1132 600.1 L1132 596.2 L1133 596.2 L1133 593.2 L1134 593.2 L1134 601.7 L1135 601.7 L1135 603.6 L1136 603.6 L1136 589.0 L1137 589.0 L1137 592.8 L1138 592.8 L1138 602.3 L1139 602.3 L1139 592.7 L1140 592.7 L1140 592.6 L1141 592.6 L1141 598.6 L1142 598.6 L1142 599.4 L1143 599.4 L1143 608.4 L1144 608.4 L1144 593.6 L1145 593.6 L1145 592.5 L1146 592.5 L1146 590.0 L1147 590.0 L1147 592.0 L1148 592.0 L1148 599.0 L1149 599.0 L1149 596.1 L1150 596.1 L1150 587.8 L1151 587.8 L1151 590.4 L1152 590.4 L1152 590.8 L1153 590.8 L1153 592.0 L1154 592.0 L1154 601.5 L1155 601.5 L1155 588.4 L1156 588.4 L1156 598.0 L1157 598.0 L1157 597.8 L1158 597.8 L1158 590.0 L1159 590.0 L1159 595.1 L1160 595.1 L1160 608.3 L1161 608.3 L1161 598.9 L1162 598.9 L1162 593.1 L1163 593.1 L1163 595.5 L1164 595.5 L1164 598.1 L1165 598.1 L1165 604.7 L1166 604.7 L1166 590.6 L1167 590.6 L1167 591.3 L1168 591.3 L1168 586.0 L1169 586.0 L1169 601.7 L1170 601.7 L1170 608.4 L1171 608.4 L1171 597.7 L1172 597.7 L1172 605.0 L1173 605.0 L1173 601.0 L1174 601.0 L1174 591.9 L1175 591.9 L1175 595.7 L1176 595.7 L1176 708.0 Z" fill="#3854a5"/><rect x="53" y="685.6" width="1.2" height="22.4" fill="#fff"/><rect x="71" y="684.8" width="1.2" height="23.2" fill="#fff"/><rect x="76" y="705.9" width="1.2" height="2.1" fill="#fff"/><rect x="77" y="691.9" width="1.2" height="16.1" fill="#fff"/><rect x="86" y="701.1" width="1.2" height="6.9" fill="#fff"/><rect x="92" y="695.9" width="1.2" height="12.1" fill="#fff"/><rect x="109" y="699.4" width="1.2" height="8.6" fill="#fff"/><rect x="114" y="700.0" width="1.2" height="8.0" fill="#fff"/><rect x="120" y="691.5" width="1.2" height="16.5" fill="#fff"/><rect x="132" y="687.4" width="1.2" height="20.6" fill="#fff"/><rect x="139" y="705.0" width="1.2" height="3.0" fill="#fff"/><rect x="145" y="700.8" width="1.2" height="7.2" fill="#fff"/><rect x="173" y="703.3" width="1.2" height="4.7" fill="#fff"/><rect x="182" y="703.2" width="1.2" height="4.8" fill="#fff"/><rect x="207" y="689.4" width="1.2" height="18.6" fill="#fff"/><rect x="212" y="700.7" width="1.2" height="7.3" fill="#fff"/><rect x="216" y="701.5" width="1.2" height="6.5" fill="#fff"/><rect x="236" y="702.5" width="1.2" height="5.5" fill="#fff"/><rect x="261" y="700.2" width="1.2" height="7.8" fill="#fff"/><rect x="265" y="682.4" width="1.2" height="25.6" fill="#fff"/><rect x="269" y="693.5" width="1.2" height="14.5" fill="#fff"/><rect x="270" y="696.6" width="1.2" height="11.4" fill="#fff"/><rect x="272" y="702.1" width="1.2" height="5.9" fill="#fff"/><rect x="274" y="697.1" width="1.2" height="10.9" fill="#fff"/><rect x="286" y="698.5" width="1.2" height="9.5" fill="#fff"/><rect x="289" y="686.7" width="1.2" height="21.3" fill="#fff"/><rect x="301" y="705.1" width="1.2" height="2.9" fill="#fff"/><rect x="326" y="705.9" width="1.2" height="2.1" fill="#fff"/><rect x="336" y="703.5" width="1.2" height="4.5" fill="#fff"/><rect x="340" y="704.9" width="1.2" height="3.1" fill="#fff"/><rect x="349" y="702.4" width="1.2" height="5.6" fill="#fff"/><rect x="352" y="686.9" width="1.2" height="21.1" fill="#fff"/><rect x="361" y="701.9" width="1.2" height="6.1" fill="#fff"/><rect x="363" y="685.6" width="1.2" height="22.4" fill="#fff"/><rect x="365" y="689.9" width="1.2" height="18.1" fill="#fff"/><rect x="366" y="701.6" width="1.2" height="6.4" fill="#fff"/><rect x="374" y="705.1" width="1.2" height="2.9" fill="#fff"/><rect x="381" y="698.1" width="1.2" height="9.9" fill="#fff"/><rect x="393" y="699.1" width="1.2" height="8.9" fill="#fff"/><rect x="400" y="699.2" width="1.2" height="8.8" fill="#fff"/><rect x="402" y="704.3" width="1.2" height="3.7" fill="#fff"/><rect x="411" y="697.2" width="1.2" height="10.8" fill="#fff"/><rect x="418" y="683.9" width="1.2" height="24.1" fill="#fff"/><rect x="420" y="689.5" width="1.2" height="18.5" fill="#fff"/><rect x="426" y="702.2" width="1.2" height="5.8" fill="#fff"/><rect x="429" y="698.6" width="1.2" height="9.4" fill="#fff"/><rect x="437" y="689.7" width="1.2" height="18.3" fill="#fff"/><rect x="439" y="684.6" width="1.2" height="23.4" fill="#fff"/><rect x="441" y="703.9" width="1.2" height="4.1" fill="#fff"/><rect x="447" y="705.2" width="1.2" height="2.8" fill="#fff"/><rect x="461" y="684.6" width="1.2" height="23.4" fill="#fff"/><rect x="472" y="699.1" width="1.2" height="8.9" fill="#fff"/><rect x="482" y="699.8" width="1.2" height="8.2" fill="#fff"/><rect x="490" y="693.7" width="1.2" height="14.3" fill="#fff"/><rect x="504" y="704.0" width="1.2" height="4.0" fill="#fff"/><rect x="506" y="701.0" width="1.2" height="7.0" fill="#fff"/><rect x="516" y="695.4" width="1.2" height="12.6" fill="#fff"/><rect x="525" y="705.9" width="1.2" height="2.1" fill="#fff"/><rect x="528" y="699.2" width="1.2" height="8.8" fill="#fff"/><rect x="533" y="703.1" width="1.2" height="4.9" fill="#fff"/><rect x="537" y="693.2" width="1.2" height="14.8" fill="#fff"/><rect x="539" y="695.2" width="1.2" height="12.8" fill="#fff"/><rect x="544" y="699.7" width="1.2" height="8.3" fill="#fff"/><rect x="551" y="692.5" width="1.2" height="15.5" fill="#fff"/><rect x="555" y="700.0" width="1.2" height="8.0" fill="#fff"/><rect x="565" y="700.4" width="1.2" height="7.6" fill="#fff"/><rect x="577" y="684.8" width="1.2" height="23.2" fill="#fff"/><rect x="579" y="705.2" width="1.2" height="2.8" fill="#fff"/><rect x="582" y="702.6" width="1.2" height="5.4" fill="#fff"/><rect x="586" y="703.5" width="1.2" height="4.5" fill="#fff"/><rect x="590" y="700.8" width="1.2" height="7.2" fill="#fff"/><rect x="595" y="690.1" width="1.2" height="17.9" fill="#fff"/><rect x="600" y="699.5" width="1.2" height="8.5" fill="#fff"/><rect x="603" y="703.8" width="1.2" height="4.2" fill="#fff"/><rect x="607" y="690.8" width="1.2" height="17.2" fill="#fff"/><rect x="609" y="690.3" width="1.2" height="17.7" fill="#fff"/><rect x="610" y="700.8" width="1.2" height="7.2" fill="#fff"/><rect x="627" y="705.7" width="1.2" height="2.3" fill="#fff"/><rect x="636" y="695.0" width="1.2" height="13.0" fill="#fff"/><rect x="654" y="704.9" width="1.2" height="3.1" fill="#fff"/><rect x="656" y="704.2" width="1.2" height="3.8" fill="#fff"/><rect x="669" y="704.8" width="1.2" height="3.2" fill="#fff"/><rect x="680" y="697.2" width="1.2" height="10.8" fill="#fff"/><rect x="681" y="704.0" width="1.2" height="4.0" fill="#fff"/><rect x="690" y="701.4" width="1.2" height="6.6" fill="#fff"/><rect x="696" y="689.3" width="1.2" height="18.7" fill="#fff"/><rect x="704" y="688.4" width="1.2" height="19.6" fill="#fff"/><rect x="708" y="701.3" width="1.2" height="6.7" fill="#fff"/><rect x="730" y="703.2" width="1.2" height="4.8" fill="#fff"/><rect x="732" y="699.4" width="1.2" height="8.6" fill="#fff"/><rect x="739" y="696.3" width="1.2" height="11.7" fill="#fff"/><rect x="758" y="700.9" width="1.2" height="7.1" fill="#fff"/><rect x="760" y="704.8" width="1.2" height="3.2" fill="#fff"/><rect x="762" y="704.1" width="1.2" height="3.9" fill="#fff"/><rect x="765" y="699.5" width="1.2" height="8.5" fill="#fff"/><rect x="774" y="704.9" width="1.2" height="3.1" fill="#fff"/><rect x="775" y="687.2" width="1.2" height="20.8" fill="#fff"/><rect x="784" y="701.2" width="1.2" height="6.8" fill="#fff"/><rect x="790" y="704.7" width="1.2" height="3.3" fill="#fff"/><rect x="795" y="689.4" width="1.2" height="18.6" fill="#fff"/><rect x="799" y="694.9" width="1.2" height="13.1" fill="#fff"/><rect x="804" y="695.2" width="1.2" height="12.8" fill="#fff"/><rect x="824" y="705.4" width="1.2" height="2.6" fill="#fff"/><rect x="825" y="704.9" width="1.2" height="3.1" fill="#fff"/><rect x="830" y="702.4" width="1.2" height="5.6" fill="#fff"/><rect x="835" y="703.3" width="1.2" height="4.7" fill="#fff"/><rect x="849" y="701.5" width="1.2" height="6.5" fill="#fff"/><rect x="851" y="683.5" width="1.2" height="24.5" fill="#fff"/><rect x="856" y="685.9" width="1.2" height="22.1" fill="#fff"/><rect x="858" y="705.3" width="1.2" height="2.7" fill="#fff"/><rect x="860" y="700.6" width="1.2" height="7.4" fill="#fff"/><rect x="862" y="704.9" width="1.2" height="3.1" fill="#fff"/><rect x="873" y="700.8" width="1.2" height="7.2" fill="#fff"/><rect x="886" y="693.2" width="1.2" height="14.8" fill="#fff"/><rect x="902" y="688.7" width="1.2" height="19.3" fill="#fff"/><rect x="913" y="699.6" width="1.2" height="8.4" fill="#fff"/><rect x="942" y="689.7" width="1.2" height="18.3" fill="#fff"/><rect x="951" y="705.8" width="1.2" height="2.2" fill="#fff"/><rect x="954" y="700.8" width="1.2" height="7.2" fill="#fff"/><rect x="969" y="700.2" width="1.2" height="7.8" fill="#fff"/><rect x="982" y="703.0" width="1.2" height="5.0" fill="#fff"/><rect x="985" y="700.3" width="1.2" height="7.7" fill="#fff"/><rect x="1019" y="699.7" width="1.2" height="8.3" fill="#fff"/><rect x="1035" y="703.6" width="1.2" height="4.4" fill="#fff"/><rect x="1053" y="691.5" width="1.2" height="16.5" fill="#fff"/><rect x="1054" y="700.4" width="1.2" height="7.6" fill="#fff"/><rect x="1070" y="703.8" width="1.2" height="4.2" fill="#fff"/><rect x="1083" y="682.6" width="1.2" height="25.4" fill="#fff"/><rect x="1093" y="686.6" width="1.2" height="21.4" fill="#fff"/><rect x="1115" y="685.4" width="1.2" height="22.6" fill="#fff"/><rect x="1116" y="702.6" width="1.2" height="5.4" fill="#fff"/><rect x="1140" y="705.6" width="1.2" height="2.4" fill="#fff"/><rect x="1144" y="700.9" width="1.2" height="7.1" fill="#fff"/><rect x="1150" y="691.6" width="1.2" height="16.4" fill="#fff"/><rect x="1155" y="686.2" width="1.2" height="21.8" fill="#fff"/><rect x="1158" y="705.1" width="1.2" height="2.9" fill="#fff"/><rect x="1159" y="688.3" width="1.2" height="19.7" fill="#fff"/><rect x="1160" y="704.7" width="1.2" height="3.3" fill="#fff"/><rect x="51.0" y="174.0" width="1.8" height="426.0" fill="#3a4ea6"/><rect x="162.6" y="214.2" width="1.8" height="385.8" fill="#3a4ea6"/><rect x="275.3" y="250.0" width="1.8" height="350.0" fill="#3a4ea6"/><rect x="388.3" y="315.9" width="1.8" height="284.1" fill="#3a4ea6"/><rect x="499.8" y="408.5" width="1.8" height="191.5" fill="#3a4ea6"/><rect x="612.7" y="478.5" width="1.8" height="121.5" fill="#3a4ea6"/><rect x="725.1" y="508.3" width="1.8" height="91.7" fill="#3a4ea6"/><rect x="837.4" y="527.3" width="1.8" height="72.7" fill="#3a4ea6"/><rect x="949.8" y="501.0" width="1.8" height="99.0" fill="#3a4ea6"/><rect x="1061.8" y="492.7" width="1.8" height="107.3" fill="#3a4ea6"/></svg>
<div class="t" style="right:1150px;top:140.7px;font-size:14.5px;color:#4040a4">20.0</div>
<div class="t" style="right:1150px;top:197.7px;font-size:14.5px;color:#4040a4">9.0</div>
<div class="t" style="right:1150px;top:253.5px;font-size:14.5px;color:#4040a4">-2.0</div>
<div class="t" style="right:1150px;top:309.4px;font-size:14.5px;color:#4040a4">-13.0</div>
<div class="t" style="right:1150px;top:365.2px;font-size:14.5px;color:#4040a4">-24.0</div>
<div class="t" style="right:1150px;top:421.1px;font-size:14.5px;color:#4040a4">-35.0</div>
<div class="t" style="right:1150px;top:476.9px;font-size:14.5px;color:#4040a4">-46.0</div>
<div class="t" style="right:1150px;top:532.8px;font-size:14.5px;color:#4040a4">-57.0</div>
<div class="t" style="right:1150px;top:588.6px;font-size:14.5px;color:#4040a4">-68.0</div>
<div class="t" style="right:1150px;top:644.5px;font-size:14.5px;color:#4040a4">-79.0</div>
<div class="t" style="right:1150px;top:700.3px;font-size:14.5px;color:#4040a4">-90.0</div>
<div class="t" style="left:18.5px;top:164.5px;font-size:14px;color:#4040a4">dBm</div>
<div class="a" style="left:16px;top:250px;width:23px;height:1.2px;background:#4040a4"></div>
<div class="a" style="left:5px;top:145.4px;width:10.5px;height:10px;background:#3854a5;border:2px solid #000"></div>
<div class="t" style="left:50.8px;top:718px;font-size:14.5px;color:#222;transform:translateX(-50%)">0.0</div>
<div class="t" style="left:163.3px;top:718px;font-size:14.5px;color:#222;transform:translateX(-50%)">5.0</div>
<div class="t" style="left:275.7px;top:718px;font-size:14.5px;color:#222;transform:translateX(-50%)">10.0</div>
<div class="t" style="left:388.2px;top:718px;font-size:14.5px;color:#222;transform:translateX(-50%)">15.0</div>
<div class="t" style="left:500.7px;top:718px;font-size:14.5px;color:#222;transform:translateX(-50%)">20.0</div>
<div class="t" style="left:613.1px;top:718px;font-size:14.5px;color:#222;transform:translateX(-50%)">25.0</div>
<div class="t" style="left:725.6px;top:718px;font-size:14.5px;color:#222;transform:translateX(-50%)">30.0</div>
<div class="t" style="left:838.1px;top:718px;font-size:14.5px;color:#222;transform:translateX(-50%)">35.0</div>
<div class="t" style="left:950.6px;top:718px;font-size:14.5px;color:#222;transform:translateX(-50%)">40.0</div>
<div class="t" style="left:1063.0px;top:718px;font-size:14.5px;color:#222;transform:translateX(-50%)">45.0</div>
<div class="t" style="left:1175.5px;top:718px;font-size:14.5px;color:#222;transform:translateX(-50%)">50.0</div>
<div class="a" style="left:45px;top:703.5px;width:10.5px;height:10px;border:2px solid #000;background:#fff"></div>
<div class="a" style="left:7px;top:732.5px;width:41.8px;height:15px;background:#7173c4"></div>
<div class="t" style="left:17.5px;top:736.5px;font-size:11px;color:#e8eaf8">x1.0</div>
<div class="t" style="left:52.5px;top:739.5px;font-size:14px;color:#1e1e1e">kHz</div>
<div class="a" style="left:5px;top:757px;width:1190px;height:103px;background:#fff"></div>
<div class="a" style="left:5px;top:757px;width:1190px;height:19px;background:#a0a0a0"></div>
<div class="a" style="left:5px;top:757px;width:17.3px;height:99px;background:#a0a0a0"></div>
<div class="a" style="left:22.3px;top:776px;width:1172px;height:26px;background:#76a2cf"></div>
<div class="a" style="left:22.3px;top:829px;width:1172px;height:1.3px;background:#a8a8a8"></div>
<div class="a" style="left:5px;top:855.8px;width:1190px;height:1.3px;background:#a8a8a8"></div>
<div class="a" style="left:1174px;top:775.5px;width:18px;height:2px;background:#a0a0a0"></div>
<div class="t" style="left:29.3px;top:760.5px;font-size:14px;color:#f8f8f8;letter-spacing:-0.2px">Channel</div>
<div class="t" style="left:27.8px;top:782.0px;font-size:16.2px;color:#eef2f8;letter-spacing:0.15px">A</div>
<div class="t" style="left:27.8px;top:809.3px;font-size:16.2px;color:#161616;letter-spacing:0.15px">A</div>
<div class="t" style="left:27.8px;top:836.6px;font-size:16.2px;color:#161616;letter-spacing:0.15px">A</div>
<div class="a" style="left:110.0px;top:776px;width:1.3px;height:80px;background:#a8a8a8"></div>
<div class="a" style="left:110.0px;top:758.5px;width:1.2px;height:16px;background:#f0f0f0"></div>
<div class="t" style="left:117.0px;top:760.5px;font-size:14px;color:#f8f8f8;letter-spacing:-0.2px">Name</div>
<div class="t" style="left:115.5px;top:782.4px;font-size:15.6px;color:#eef2f8;letter-spacing:0.0px">Frequency at Peak</div>
<div class="t" style="left:115.5px;top:809.7px;font-size:15.6px;color:#161616;letter-spacing:0.0px">Total Power</div>
<div class="t" style="left:115.5px;top:837.0px;font-size:15.6px;color:#161616;letter-spacing:0.0px">Signal to Noise Ratio (SNR)</div>
<div class="a" style="left:315.0px;top:776px;width:1.3px;height:80px;background:#a8a8a8"></div>
<div class="a" style="left:315.0px;top:758.5px;width:1.2px;height:16px;background:#f0f0f0"></div>
<div class="t" style="left:322.0px;top:760.5px;font-size:14px;color:#f8f8f8;letter-spacing:-0.2px">Value</div>
<div class="t" style="left:320.5px;top:782.0px;font-size:16.2px;color:#eef2f8;letter-spacing:0.15px">5 kHz</div>
<div class="t" style="left:320.5px;top:809.3px;font-size:16.2px;color:#161616;letter-spacing:0.15px">48.91 mW</div>
<div class="t" style="left:320.5px;top:836.6px;font-size:16.2px;color:#161616;letter-spacing:0.15px">35.73 dBc</div>
<div class="a" style="left:403.3px;top:776px;width:1.3px;height:80px;background:#a8a8a8"></div>
<div class="a" style="left:403.3px;top:758.5px;width:1.2px;height:16px;background:#f0f0f0"></div>
<div class="t" style="left:410.3px;top:760.5px;font-size:14px;color:#f8f8f8;letter-spacing:-0.2px">Min</div>
<div class="t" style="left:408.8px;top:782.0px;font-size:16.2px;color:#eef2f8;letter-spacing:0.15px">5 kHz</div>
<div class="t" style="left:408.8px;top:809.3px;font-size:16.2px;color:#161616;letter-spacing:0.15px">48.91 mW</div>
<div class="t" style="left:408.8px;top:836.6px;font-size:16.2px;color:#161616;letter-spacing:0.15px">35.73 dBc</div>
<div class="a" style="left:491.0px;top:776px;width:1.3px;height:80px;background:#a8a8a8"></div>
<div class="a" style="left:491.0px;top:758.5px;width:1.2px;height:16px;background:#f0f0f0"></div>
<div class="t" style="left:498.0px;top:760.5px;font-size:14px;color:#f8f8f8;letter-spacing:-0.2px">Max</div>
<div class="t" style="left:496.5px;top:782.0px;font-size:16.2px;color:#eef2f8;letter-spacing:0.15px">5 kHz</div>
<div class="t" style="left:496.5px;top:809.3px;font-size:16.2px;color:#161616;letter-spacing:0.15px">48.91 mW</div>
<div class="t" style="left:496.5px;top:836.6px;font-size:16.2px;color:#161616;letter-spacing:0.15px">35.73 dBc</div>
<div class="a" style="left:579.3px;top:776px;width:1.3px;height:80px;background:#a8a8a8"></div>
<div class="a" style="left:579.3px;top:758.5px;width:1.2px;height:16px;background:#f0f0f0"></div>
<div class="t" style="left:586.3px;top:760.5px;font-size:14px;color:#f8f8f8;letter-spacing:-0.2px">Average</div>
<div class="t" style="left:584.8px;top:782.0px;font-size:16.2px;color:#eef2f8;letter-spacing:0.15px">5 kHz</div>
<div class="t" style="left:584.8px;top:809.3px;font-size:16.2px;color:#161616;letter-spacing:0.15px">48.91 mW</div>
<div class="t" style="left:584.8px;top:836.6px;font-size:16.2px;color:#161616;letter-spacing:0.15px">35.73 dBc</div>
<div class="a" style="left:667.3px;top:776px;width:1.3px;height:80px;background:#a8a8a8"></div>
<div class="a" style="left:667.3px;top:758.5px;width:1.2px;height:16px;background:#f0f0f0"></div>
<div class="t" style="left:674.3px;top:760.5px;font-size:14px;color:#f8f8f8;letter-spacing:-0.2px">σ</div>
<div class="t" style="left:672.8px;top:782.0px;font-size:16.2px;color:#eef2f8;letter-spacing:0.15px">0 Hz</div>
<div class="t" style="left:672.8px;top:809.3px;font-size:16.2px;color:#161616;letter-spacing:0.15px">0 W</div>
<div class="t" style="left:672.8px;top:836.6px;font-size:16.2px;color:#161616;letter-spacing:0.15px">0 dBc</div>
<div class="a" style="left:743.3px;top:776px;width:1.3px;height:80px;background:#a8a8a8"></div>
<div class="a" style="left:743.3px;top:758.5px;width:1.2px;height:16px;background:#f0f0f0"></div>
<div class="t" style="left:750.3px;top:760.5px;font-size:14px;color:#f8f8f8;letter-spacing:-0.2px">Capture Count</div>
<div class="t" style="left:748.8px;top:782.0px;font-size:16.2px;color:#eef2f8;letter-spacing:0.15px">1</div>
<div class="t" style="left:748.8px;top:809.3px;font-size:16.2px;color:#161616;letter-spacing:0.15px">1</div>
<div class="t" style="left:748.8px;top:836.6px;font-size:16.2px;color:#161616;letter-spacing:0.15px">1</div>
<div class="a" style="left:871.7px;top:776px;width:1.3px;height:80px;background:#a8a8a8"></div>
<div class="a" style="left:871.7px;top:758.5px;width:1.2px;height:16px;background:#f0f0f0"></div>
<div class="t" style="left:878.7px;top:760.5px;font-size:14px;color:#f8f8f8;letter-spacing:-0.2px">Span</div>
<div class="t" style="left:877.2px;top:782.0px;font-size:16.2px;color:#eef2f8;letter-spacing:0.15px">At Peak</div>
<div class="t" style="left:877.2px;top:809.3px;font-size:16.2px;color:#161616;letter-spacing:0.15px">Whole trace</div>
<div class="t" style="left:877.2px;top:836.6px;font-size:16.2px;color:#161616;letter-spacing:0.15px">Whole trace</div>
<div class="a" style="left:9.3px;top:785.0px;width:7.5px;height:7.5px;background:#3854a5;border:1.5px solid #000"></div>
<div class="a" style="left:9.3px;top:812.0px;width:7.5px;height:7.5px;background:#3854a5;border:1.5px solid #000"></div>
<div class="a" style="left:9.3px;top:839.0px;width:7.5px;height:7.5px;background:#3854a5;border:1.5px solid #000"></div>
<div class="a" style="left:1177px;top:771px;width:9px;height:3px;background:#fff"></div>
<div class="a" style="left:1.2px;top:864px;width:1197px;height:39px;background:linear-gradient(#f0ede6,#ebe6da);border:1.3px solid #8f7868;border-radius:2px;box-shadow:inset 0 0 0 1px #fcfbf8"></div>
<div class="t" style="left:12.5px;top:875px;font-size:14px;color:#161616">Stopped</div>
<div class="tri" style="left:86px;top:876px;border-top:7px solid transparent;border-bottom:7px solid transparent;border-left:9px solid #2a9a3a"></div>
<div class="sel" style="left:105px;top:867px;width:32px;height:31px"></div>
<div class="a" style="left:115px;top:875.5px;width:13px;height:13.5px;background:#e82020"></div>
<div class="sep" style="left:139px;top:868px;height:29px"></div>
<div class="t" style="left:146px;top:875px;font-size:14px;color:#161616">Trigger</div>
<div class="combo" style="left:204px;top:867.5px;width:87px;height:30px"></div>
<div class="t" style="left:209px;top:875px;font-size:14px;color:#161616;letter-spacing:-0.5px">Repeat</div>
<div class="dd" style="left:270px;top:880px"></div>
<div class="sep" style="left:328.5px;top:868px;height:29px"></div>
<div class="combo" style="left:337.5px;top:867.5px;width:52px;height:30px"></div>
<div class="t" style="left:342.5px;top:875px;font-size:14px;color:#161616">A</div>
<div class="dd" style="left:368px;top:880px"></div>
<div class="sep" style="left:394.3px;top:868px;height:29px"></div>
<div class="sel" style="left:399.2px;top:867.5px;width:30.5px;height:30.5px"></div>
<div class="sep" style="left:464px;top:868px;height:29px"></div>
<div class="fld" style="left:501.5px;top:868.0px;width:59.5px;height:30.0px"></div>
<div class="bl" style="left:474.0px;top:868.0px;width:29.0px;height:30.0px"></div>
<div class="br" style="left:559.5px;top:868.0px;width:29.5px;height:30.0px"></div>
<div class="tri" style="left:484.9px;top:877.2px;border-top:5.8px solid transparent;border-bottom:5.8px solid transparent;border-right:6.8px solid #1a6fc9"></div>
<div class="tri" style="left:571.7px;top:877.2px;border-top:5.8px solid transparent;border-bottom:5.8px solid transparent;border-left:6.8px solid #1a6fc9"></div>
<div class="t" style="left:509px;top:875px;font-size:14px;color:#161616;letter-spacing:-0.5px">1.569 V</div>
<div class="sep" style="left:596px;top:868px;height:29px"></div>
<div class="fld" style="left:634.0px;top:868.0px;width:59.0px;height:30.0px"></div>
<div class="bl" style="left:605.0px;top:868.0px;width:30.5px;height:30.0px"></div>
<div class="br" style="left:691.5px;top:868.0px;width:29.5px;height:30.0px"></div>
<div class="tri" style="left:616.6px;top:877.2px;border-top:5.8px solid transparent;border-bottom:5.8px solid transparent;border-right:6.8px solid #1a6fc9"></div>
<div class="tri" style="left:703.7px;top:877.2px;border-top:5.8px solid transparent;border-bottom:5.8px solid transparent;border-left:6.8px solid #1a6fc9"></div>
<div class="t" style="left:641px;top:875px;font-size:14px;color:#161616;letter-spacing:-0.4px">10 %</div>
<div class="fld" style="left:790.0px;top:868.0px;width:59.0px;height:30.0px"></div>
<div class="bl dis" style="left:761.0px;top:868.0px;width:30.5px;height:30.0px"></div>
<div class="br dis" style="left:847.5px;top:868.0px;width:29.5px;height:30.0px"></div>
<div class="tri" style="left:772.6px;top:877.2px;border-top:5.8px solid transparent;border-bottom:5.8px solid transparent;border-right:6.8px solid #5eaee2"></div>
<div class="tri" style="left:859.7px;top:877.2px;border-top:5.8px solid transparent;border-bottom:5.8px solid transparent;border-left:6.8px solid #5eaee2"></div>
<div class="a" style="left:790px;top:868px;width:59px;height:30px;background:#f5f4f1;border:1.5px solid #cdc8c2"></div>
<div class="t" style="left:798px;top:875px;font-size:14px;color:#c4c4c4">0 s</div>
<div class="sep" style="left:883px;top:868px;height:29px"></div>
<div class="t" style="left:892px;top:875px;font-size:14px;color:#161616">Measurements</div>
<div class="a" style="left:1132px;top:867px;width:27px;height:31px;background:#ece8e0"></div>
<div class="sep" style="left:1084px;top:868px;height:29px"></div>
<div class="t" style="left:1093px;top:875px;font-size:14px;color:#161616">Notes</div>
<svg class="a" style="left:6px;top:72px" width="28" height="22" viewBox="6 72 28 22"><path d="M9 86.5 C11 80 13 76.5 15.5 77.5 C18 78.5 19.5 89 22 89 C25 89 26.5 82 28.5 79.5" fill="none" stroke="#2f48b8" stroke-width="2"/><path d="M9 88.5 C12 86 14 77.5 17.5 77.5 C21 77.5 22 88.5 25 88.5 C27 88.5 28 86 28.5 84.5" fill="none" stroke="#e8302a" stroke-width="2"/></svg>
<svg class="a" style="left:38px;top:72px" width="24" height="22" viewBox="38 72 24 22"><rect x="46" y="77.5" width="2" height="11" fill="#ffffff"/><rect x="48" y="77.5" width="2" height="11" fill="#30b8f0"/><rect x="50" y="77.5" width="2" height="11" fill="#8a50b0"/><path d="M40 88.5 H42.5 V76.8 H53.5 V88.5 H59" fill="none" stroke="#ee3322" stroke-width="1.8"/></svg>
<svg class="a" style="left:68px;top:70px" width="26" height="22" viewBox="68 70 26 22"><rect x="72.5" y="79.4" width="2.3" height="7.6" rx="1" fill="#22229a"/><rect x="77.0" y="74.8" width="2.3" height="12.2" rx="1" fill="#22229a"/><rect x="82.0" y="78.3" width="2.3" height="8.7" rx="1" fill="#22229a"/><rect x="86.7" y="80.9" width="2.3" height="6.1" rx="1" fill="#22229a"/><rect x="71" y="86.5" width="19" height="1.6" fill="#111"/></svg>
<svg class="a" style="left:106px;top:70px" width="26" height="26" viewBox="106 70 26 26"><rect x="110.7" y="79.4" width="2.3" height="7.6" rx="1" fill="#22229a"/><rect x="115.3" y="74.8" width="2.3" height="12.2" rx="1" fill="#22229a"/><rect x="120.0" y="78.3" width="2.3" height="8.7" rx="1" fill="#22229a"/><rect x="125.0" y="80.9" width="2.3" height="6.1" rx="1" fill="#22229a"/><rect x="109" y="86.7" width="17" height="1.6" fill="#111"/><path d="M120 92.5 L128.3 92.5 L128.3 84 Z" fill="#000"/></svg>
<svg class="a" style="left:146px;top:72px" width="22" height="22" viewBox="146 72 22 22"><path d="M155 75 L162.5 75 L158.5 79.5 L164 78.8 L152 91.5 L156.5 83.5 L150.5 84 Z" fill="#f0c020" stroke="#8a5a10" stroke-width="1"/></svg>
<svg class="a" style="left:175px;top:72px" width="25" height="22" viewBox="175 72 25 22"><rect x="191" y="74.5" width="2.5" height="5" fill="#c01818"/><rect x="180.5" y="81" width="14.5" height="10" fill="#eef6fb" stroke="#1e2850" stroke-width="1.2"/><rect x="185.5" y="84.5" width="4.5" height="6" fill="#d8a020" stroke="#8a6010" stroke-width="0.6"/><path d="M177.8 83.5 L187.5 75 L197 83.5" fill="none" stroke="#c09020" stroke-width="2.2"/></svg>
<svg class="a" style="left:581px;top:71px" width="23" height="23" viewBox="581 71 23 23"><circle cx="592.3" cy="82.3" r="8.3" fill="#fbfbfe" stroke="#4a5580" stroke-width="1.6"/><path d="M587.3 87.8 L591 81 L594 84 Z" fill="#e82828"/><path d="M597.8 76.8 L591 81 L594 84 Z" fill="#4a50b8"/></svg>
<svg class="a" style="left:748px;top:72px" width="18" height="22" viewBox="748 72 18 22"><path d="M751.7 74.3 L751.7 88.4 L755 85.3 L758.3 91.5 L761.2 90 L758.1 84.1 L762.3 83.5 Z" fill="#000" stroke="#fff" stroke-width="0.6"/></svg>
<svg class="a" style="left:774px;top:71px" width="26" height="25" viewBox="774 71 26 25"><path d="M782.5 92.5 L778 84 C777 82.5 778.5 81 780 82 L783 84.5 L782 77 C782 75 784.5 75 784.8 77 L786 81 L786.3 74.5 C786.5 72.8 789 72.8 789.2 74.5 L789.6 80.5 L790.6 75.2 C791 73.5 793.2 73.8 793 75.6 L792.6 81 L794.2 77.5 C795 76 796.8 76.8 796.2 78.6 L794 86 L792 92.5 Z" fill="#fff" stroke="#000" stroke-width="1.3" stroke-linejoin="round"/></svg>
<svg class="a" style="left:805px;top:71px" width="28" height="24" viewBox="805 71 28 24"><line x1="819.6" y1="85.2" x2="825.6" y2="91.7" stroke="#3a3a5a" stroke-width="4.2" stroke-linecap="round"/><line x1="820.1" y1="85.2" x2="825.1" y2="90.7" stroke="#f08a3a" stroke-width="2.2" stroke-linecap="round"/><circle cx="814.6" cy="80.2" r="6.6" fill="#e4f2fb" stroke="#4e5678" stroke-width="1.9"/><circle cx="814.6" cy="80.2" r="5.2" fill="none" stroke="#a8d4f0" stroke-width="0.9"/><path d="M812 77 Q810.3 80.2 812 83.4" fill="none" stroke="#6a3aa8" stroke-width="1.8"/><path d="M817.2 77 Q818.9 80.2 817.2 83.4" fill="none" stroke="#6a3aa8" stroke-width="1.8"/></svg>
<svg class="a" style="left:836px;top:71px" width="28" height="24" viewBox="836 71 28 24"><line x1="850.5" y1="85.2" x2="856.5" y2="91.7" stroke="#3a3a5a" stroke-width="4.2" stroke-linecap="round"/><line x1="851.0" y1="85.2" x2="856.0" y2="90.7" stroke="#f08a3a" stroke-width="2.2" stroke-linecap="round"/><circle cx="845.5" cy="80.2" r="6.6" fill="#e4f2fb" stroke="#4e5678" stroke-width="1.9"/><circle cx="845.5" cy="80.2" r="5.2" fill="none" stroke="#a8d4f0" stroke-width="0.9"/><path d="M845.5 76.4 V84 M841.7 80.2 H849.3" stroke="#6a2aa0" stroke-width="2.2"/></svg>
<svg class="a" style="left:867px;top:71px" width="28" height="24" viewBox="867 71 28 24"><line x1="881.4" y1="85.2" x2="887.4" y2="91.7" stroke="#3a3a5a" stroke-width="4.2" stroke-linecap="round"/><line x1="881.9" y1="85.2" x2="886.9" y2="90.7" stroke="#f08a3a" stroke-width="2.2" stroke-linecap="round"/><circle cx="876.4" cy="80.2" r="6.6" fill="#e4f2fb" stroke="#4e5678" stroke-width="1.9"/><circle cx="876.4" cy="80.2" r="5.2" fill="none" stroke="#a8d4f0" stroke-width="0.9"/><path d="M872.8 80.2 H880" stroke="#6a2aa0" stroke-width="2.2"/></svg>
<svg class="a" style="left:898px;top:72px" width="24" height="22" viewBox="898 72 24 22"><path d="M904 79.5 C908 75 916 75 916.5 81 C917 86 912 89 910 91" fill="none" stroke="#aac4e4" stroke-width="2.6"/><path d="M901.5 75 L902 83 L909 82 Z" fill="#aac4e4"/></svg>
<svg class="a" style="left:935px;top:71px" width="28" height="24" viewBox="935 71 28 24"><line x1="950.2" y1="85.2" x2="956.2" y2="91.7" stroke="#3a3a5a" stroke-width="4.2" stroke-linecap="round"/><line x1="950.7" y1="85.2" x2="955.7" y2="90.7" stroke="#f08a3a" stroke-width="2.2" stroke-linecap="round"/><circle cx="945.2" cy="80.2" r="6.6" fill="#e4f2fb" stroke="#4e5678" stroke-width="1.9"/><circle cx="945.2" cy="80.2" r="5.2" fill="none" stroke="#a8d4f0" stroke-width="0.9"/><text x="945.2" y="83" font-family="Liberation Sans" font-weight="bold" font-size="8" text-anchor="middle" fill="#000" letter-spacing="-0.6">100</text></svg>
<svg class="a" style="left:298px;top:870px" width="25" height="24" viewBox="298 870 25 24"><rect x="308.3" y="874" width="7.7" height="18" fill="#b8d8f0"/><path d="M300 888 H304.2 V879 H313 V888 H320" fill="none" stroke="#111" stroke-width="1.8"/><circle cx="312" cy="883.8" r="1.8" fill="#20b040"/><path d="M311 872.8 H320 V881.7 Z" fill="#000"/></svg>
<svg class="a" style="left:403px;top:872px" width="24" height="22" viewBox="403 872 24 22"><path d="M406.7 889.2 L414.9 879.5 Q417 877 423 877" fill="none" stroke="#111" stroke-width="1.6"/><path d="M414.2 877 V889 M412 880 L414.2 877 L416.4 880 M412 886 L414.2 889 L416.4 886" fill="none" stroke="#3a6ad8" stroke-width="1.2"/></svg>
<svg class="a" style="left:434px;top:872px" width="24" height="22" viewBox="434 872 24 22"><path d="M437.5 877 Q442 877 444.5 879.5 L453.9 889.2" fill="none" stroke="#111" stroke-width="1.6"/><path d="M445.2 877 V889 M443 880 L445.2 877 L447.4 880 M443 886 L445.2 889 L447.4 886" fill="none" stroke="#3a6ad8" stroke-width="1.2"/></svg>
<svg class="a" style="left:728px;top:872px" width="25" height="22" viewBox="728 872 25 22"><path d="M730.7 885.5 L736.3 879.1 L741.3 883.3 L746.2 890.4 L749.8 887.2" fill="none" stroke="#111" stroke-width="1.6" stroke-linejoin="round"/><path d="M734 877 H745" stroke="#2a3ac0" stroke-width="1.6"/><path d="M733 873.5 L735.5 877 L733 880.5 Z M744 873.5 L748 877 L744 880.5 Z" fill="#2a3ac0"/><path d="M746.8 879 L749.3 881.7 L746.8 884.4 L744.3 881.7 Z" fill="#e8e020" stroke="#111" stroke-width="1"/></svg>
<svg class="a" style="left:994px;top:871px" width="21" height="22" viewBox="994 871 21 22"><defs><linearGradient id="gg" x1="0" y1="0" x2="0" y2="1"><stop offset="0" stop-color="#58c058"/><stop offset="1" stop-color="#2aa02a"/></linearGradient></defs><rect x="995.6" y="873" width="17.5" height="17.5" fill="#1e4a6a"/><rect x="995.6" y="873" width="16.3" height="16.3" fill="#17803a"/><rect x="996.8" y="874.2" width="15" height="15" fill="url(#gg)"/><rect x="996.2" y="874.2" width="1" height="15" fill="#e8f8e8"/><path d="M1004.3 877.0 V886.6 M999.5 881.8 H1009.1" stroke="#fff" stroke-width="2.6"/></svg>
<svg class="a" style="left:1025px;top:871px" width="21" height="22" viewBox="1025 871 21 22"><defs><linearGradient id="gg" x1="0" y1="0" x2="0" y2="1"><stop offset="0" stop-color="#58c058"/><stop offset="1" stop-color="#2aa02a"/></linearGradient></defs><rect x="1026.8" y="873" width="17.5" height="17.5" fill="#1e4a6a"/><rect x="1026.8" y="873" width="16.3" height="16.3" fill="#17803a"/><rect x="1028.0" y="874.2" width="15" height="15" fill="url(#gg)"/><rect x="1027.4" y="874.2" width="1" height="15" fill="#e8f8e8"/><path d="M1030.5 882.6 H1040.5" stroke="#fff" stroke-width="2.4"/></svg>
<svg class="a" style="left:1056px;top:871px" width="21" height="22" viewBox="1056 871 21 22"><defs><linearGradient id="gg" x1="0" y1="0" x2="0" y2="1"><stop offset="0" stop-color="#58c058"/><stop offset="1" stop-color="#2aa02a"/></linearGradient></defs><rect x="1057.5" y="873" width="17.5" height="17.5" fill="#1e4a6a"/><rect x="1057.5" y="873" width="16.3" height="16.3" fill="#17803a"/><rect x="1058.7" y="874.2" width="15" height="15" fill="url(#gg)"/><rect x="1058.1" y="874.2" width="1" height="15" fill="#e8f8e8"/><path d="M1060.7 884.8 L1071.7 884.8 L1066.2 877.8 Z" fill="#fff"/></svg>
<svg class="a" style="left:1137px;top:871px" width="21" height="22" viewBox="1137 871 21 22"><defs><linearGradient id="gg" x1="0" y1="0" x2="0" y2="1"><stop offset="0" stop-color="#58c058"/><stop offset="1" stop-color="#2aa02a"/></linearGradient></defs><rect x="1138.0" y="873" width="17.5" height="17.5" fill="#1e4a6a"/><rect x="1138.0" y="873" width="16.3" height="16.3" fill="#17803a"/><rect x="1139.2" y="874.2" width="15" height="15" fill="url(#gg)"/><rect x="1138.6" y="874.2" width="1" height="15" fill="#e8f8e8"/><path d="M1141.2 884.8 L1152.2 884.8 L1146.7 877.8 Z" fill="#fff"/></svg></body></html>
